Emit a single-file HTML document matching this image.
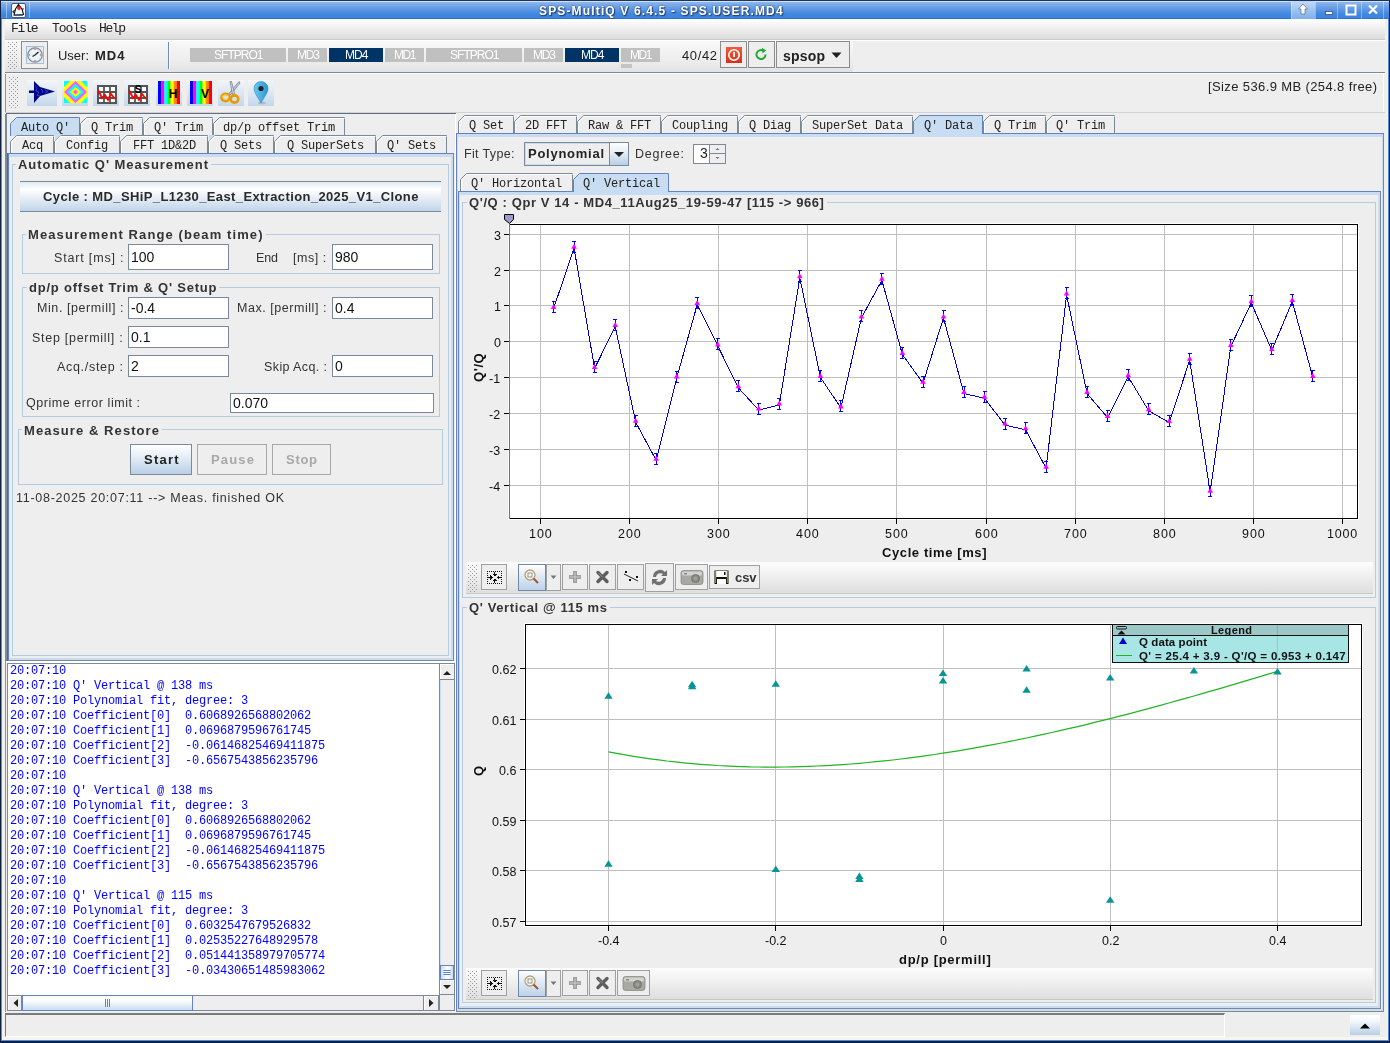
<!DOCTYPE html><html><head><meta charset="utf-8"><style>
html,body{margin:0;padding:0;}
body{width:1390px;height:1043px;overflow:hidden;position:relative;background:#eeeeee;font-family:"Liberation Sans",sans-serif;}
.r{position:absolute;box-sizing:border-box;}
.t{position:absolute;white-space:pre;line-height:0;height:0;will-change:transform;}
svg{position:absolute;}
</style></head><body>

<div class="r" style="left:0px;top:0px;width:1390px;height:19px;background:linear-gradient(#9cc0ef 0%,#6fa2e8 35%,#4489e0 70%,#3a82dc 100%)"></div>
<div class="r" style="left:0px;top:0px;width:1390px;height:1px;background:#1b3458"></div>
<div class="r" style="left:0px;top:1px;width:1390px;height:1px;background:#cfe2fa"></div>
<div class="r" style="left:0px;top:18px;width:1390px;height:1px;background:#2f74d4"></div>
<div class="t" style="left:538.50px;top:4.00px;font:bold 12px 'Liberation Sans',sans-serif;color:#ffffff;letter-spacing:1.152px;text-shadow:0 0 2px #1f3f70,1px 1px 1px #1f3f70;">SPS-MultiQ V 6.4.5 - SPS.USER.MD4</div>
<div class="r" style="left:10.5px;top:2.5px;width:15px;height:15px;background:#f8f8f8;border:1px solid #4a5a70;border-radius:2px"></div>
<svg style="left:11px;top:3px" width="14" height="14"><path d="M7.5 1.5 L11 6 L12.5 11.5 L3 12 L4.5 6 Z" fill="#fafafa" stroke="#111" stroke-width="1.1"/><path d="M7.5 1.5 L9.5 4 L6 4 Z" fill="#111"/><circle cx="8" cy="5" r="1.9" fill="#e8202a"/><path d="M4.5 7 L2 8.5 L2.5 10" fill="none" stroke="#333" stroke-width="1.2"/><path d="M11 7 L12.5 5.5" stroke="#333" stroke-width="1.2"/><path d="M3 12.5 H12" stroke="#2a4a80" stroke-width="0.8"/></svg>
<div class="r" style="left:6px;top:1px;width:1px;height:17px;background:rgba(255,255,255,0.4)"></div>
<div class="r" style="left:29px;top:1px;width:1px;height:17px;background:rgba(255,255,255,0.4)"></div>
<div class="r" style="left:1291px;top:1px;width:24px;height:18px;background:linear-gradient(#c2d9f6,#7eaee9)"></div>
<div class="r" style="left:1291px;top:1px;width:1px;height:18px;background:rgba(255,255,255,0.35)"></div>
<div class="r" style="left:1315px;top:1px;width:1px;height:18px;background:rgba(255,255,255,0.35)"></div>
<div class="r" style="left:1337px;top:1px;width:1px;height:18px;background:rgba(255,255,255,0.35)"></div>
<div class="r" style="left:1361px;top:1px;width:1px;height:18px;background:rgba(255,255,255,0.35)"></div>
<div class="r" style="left:1383px;top:1px;width:1px;height:18px;background:rgba(255,255,255,0.35)"></div>
<svg style="left:1291px;top:0px" width="100" height="19"><path d="M12 4 L7.5 9 L10 9 L10 14 L14 14 L14 9 L16.5 9 Z" fill="#fff" stroke="#3a5a88" stroke-width="0.6"/><rect x="34.5" y="11.5" width="7" height="3" fill="#fff" stroke="#2d4f80" stroke-width="0.8"/><rect x="55.5" y="5.5" width="9" height="9" fill="none" stroke="#fff" stroke-width="2"/><path d="M78 5.5 L86 13.5 M86 5.5 L78 13.5" stroke="#fff" stroke-width="2.2"/></svg>
<div class="r" style="left:0px;top:0px;width:1px;height:1043px;background:#0e2344"></div>
<div class="r" style="left:1px;top:19px;width:1px;height:1024px;background:#4f8edc"></div>
<div class="r" style="left:2px;top:19px;width:3px;height:1024px;background:#f3f1ec"></div>
<div class="r" style="left:1389px;top:0px;width:1px;height:1043px;background:#0e2344"></div>
<div class="r" style="left:1388px;top:19px;width:1px;height:1024px;background:#4f8edc"></div>
<div class="r" style="left:1385px;top:19px;width:3px;height:1024px;background:#f3f1ec"></div>
<div class="r" style="left:0px;top:1041px;width:1390px;height:2px;background:#0e2344"></div>
<div class="r" style="left:1px;top:1040px;width:1388px;height:1px;background:#4f8edc"></div>
<div class="r" style="left:2px;top:1037px;width:1386px;height:3px;background:#f6f5f2"></div>
<div class="r" style="left:5px;top:19px;width:1380px;height:20px;background:linear-gradient(#ffffff,#f0f0f0 45%,#dcdcdc)"></div>
<div class="r" style="left:5px;top:39px;width:1380px;height:1px;background:#cbcbcb"></div>
<div class="r" style="left:5px;top:40px;width:1380px;height:1px;background:#ffffff"></div>
<div class="t" style="left:11.00px;top:21.00px;font:normal 13px 'Liberation Mono',monospace;color:#222;letter-spacing:-1.229px;">File</div>
<div class="t" style="left:51.50px;top:21.00px;font:normal 13px 'Liberation Mono',monospace;color:#222;letter-spacing:-0.996px;">Tools</div>
<div class="t" style="left:99.00px;top:21.00px;font:normal 13px 'Liberation Mono',monospace;color:#222;letter-spacing:-1.396px;">Help</div>
<div class="r" style="left:5px;top:41px;width:848px;height:31px;background:linear-gradient(#f8f8f8,#eeeeee 60%,#e2e2e2)"></div>
<div class="r" style="left:5px;top:72px;width:1380px;height:1px;background:#7a8a99"></div>
<div class="r" style="left:5px;top:73px;width:1380px;height:1px;background:#ffffff"></div>
<svg style="left:7px;top:41px" width="10" height="28">
<rect x="1" y="1" width="1" height="1" fill="#9a9a9a"/>
<rect x="5" y="1" width="1" height="1" fill="#9a9a9a"/>
<rect x="9" y="1" width="1" height="1" fill="#9a9a9a"/>
<rect x="3" y="3" width="1" height="1" fill="#9a9a9a"/>
<rect x="7" y="3" width="1" height="1" fill="#9a9a9a"/>
<rect x="1" y="5" width="1" height="1" fill="#9a9a9a"/>
<rect x="5" y="5" width="1" height="1" fill="#9a9a9a"/>
<rect x="9" y="5" width="1" height="1" fill="#9a9a9a"/>
<rect x="3" y="7" width="1" height="1" fill="#9a9a9a"/>
<rect x="7" y="7" width="1" height="1" fill="#9a9a9a"/>
<rect x="1" y="9" width="1" height="1" fill="#9a9a9a"/>
<rect x="5" y="9" width="1" height="1" fill="#9a9a9a"/>
<rect x="9" y="9" width="1" height="1" fill="#9a9a9a"/>
<rect x="3" y="11" width="1" height="1" fill="#9a9a9a"/>
<rect x="7" y="11" width="1" height="1" fill="#9a9a9a"/>
<rect x="1" y="13" width="1" height="1" fill="#9a9a9a"/>
<rect x="5" y="13" width="1" height="1" fill="#9a9a9a"/>
<rect x="9" y="13" width="1" height="1" fill="#9a9a9a"/>
<rect x="3" y="15" width="1" height="1" fill="#9a9a9a"/>
<rect x="7" y="15" width="1" height="1" fill="#9a9a9a"/>
<rect x="1" y="17" width="1" height="1" fill="#9a9a9a"/>
<rect x="5" y="17" width="1" height="1" fill="#9a9a9a"/>
<rect x="9" y="17" width="1" height="1" fill="#9a9a9a"/>
<rect x="3" y="19" width="1" height="1" fill="#9a9a9a"/>
<rect x="7" y="19" width="1" height="1" fill="#9a9a9a"/>
<rect x="1" y="21" width="1" height="1" fill="#9a9a9a"/>
<rect x="5" y="21" width="1" height="1" fill="#9a9a9a"/>
<rect x="9" y="21" width="1" height="1" fill="#9a9a9a"/>
<rect x="3" y="23" width="1" height="1" fill="#9a9a9a"/>
<rect x="7" y="23" width="1" height="1" fill="#9a9a9a"/>
<rect x="1" y="25" width="1" height="1" fill="#9a9a9a"/>
<rect x="5" y="25" width="1" height="1" fill="#9a9a9a"/>
<rect x="9" y="25" width="1" height="1" fill="#9a9a9a"/>
<rect x="3" y="27" width="1" height="1" fill="#9a9a9a"/>
<rect x="7" y="27" width="1" height="1" fill="#9a9a9a"/>
</svg>
<div class="r" style="left:21px;top:41px;width:27px;height:28px;border:1px solid #8c8c8c;background:#eeeeee"></div>
<div class="r" style="left:26px;top:46px;width:18px;height:18px;border:1px solid #a9bed3;background:#e4ebf2"></div>
<svg style="left:26px;top:46px" width="18" height="18"><circle cx="9" cy="9" r="7.2" fill="#cfe9f7" stroke="#8a8a8a" stroke-width="1.2"/><circle cx="9" cy="9" r="5.5" fill="#e9f6fc"/><path d="M9 9 L12.5 6 M9 9 L6.5 10.5" stroke="#222" stroke-width="1.3"/><circle cx="14.5" cy="9" r="0.8" fill="#e55"/><circle cx="3.5" cy="9" r="0.8" fill="#e55"/><circle cx="9" cy="3.2" r="0.8" fill="#e55"/><circle cx="9" cy="14.8" r="0.8" fill="#e55"/></svg>
<div class="t" style="left:57.50px;top:48.00px;font:normal 13px 'Liberation Sans',sans-serif;color:#222;letter-spacing:-0.016px;">User:</div>
<div class="t" style="left:94.50px;top:48.00px;font:bold 13px 'Liberation Sans',sans-serif;color:#222;letter-spacing:1.023px;">MD4</div>
<div class="r" style="left:168px;top:42px;width:1px;height:27px;background:#6d8cc4"></div>
<div class="r" style="left:169px;top:42px;width:1px;height:27px;background:#ffffff"></div>
<div class="r" style="left:190px;top:48px;width:96px;height:14px;background:#c0c0c0"></div>
<div class="t" style="left:213.75px;top:48.00px;font:normal 12px 'Liberation Sans',sans-serif;color:#ffffff;letter-spacing:-0.971px;">SFTPRO1</div>
<div class="r" style="left:288px;top:48px;width:39px;height:14px;background:#c0c0c0"></div>
<div class="t" style="left:296.50px;top:48.00px;font:normal 12px 'Liberation Sans',sans-serif;color:#ffffff;letter-spacing:-1.172px;">MD3</div>
<div class="r" style="left:329px;top:48px;width:54px;height:14px;background:#003366"></div>
<div class="t" style="left:344.75px;top:48.00px;font:normal 12px 'Liberation Sans',sans-serif;color:#ffffff;letter-spacing:-0.922px;">MD4</div>
<div class="r" style="left:385px;top:48px;width:39px;height:14px;background:#c0c0c0"></div>
<div class="t" style="left:393.75px;top:48.00px;font:normal 12px 'Liberation Sans',sans-serif;color:#ffffff;letter-spacing:-1.422px;">MD1</div>
<div class="r" style="left:426px;top:48px;width:96px;height:14px;background:#c0c0c0"></div>
<div class="t" style="left:449.75px;top:48.00px;font:normal 12px 'Liberation Sans',sans-serif;color:#ffffff;letter-spacing:-0.971px;">SFTPRO1</div>
<div class="r" style="left:524px;top:48px;width:39px;height:14px;background:#c0c0c0"></div>
<div class="t" style="left:532.50px;top:48.00px;font:normal 12px 'Liberation Sans',sans-serif;color:#ffffff;letter-spacing:-1.172px;">MD3</div>
<div class="r" style="left:565px;top:48px;width:54px;height:14px;background:#003366"></div>
<div class="t" style="left:580.75px;top:48.00px;font:normal 12px 'Liberation Sans',sans-serif;color:#ffffff;letter-spacing:-0.922px;">MD4</div>
<div class="r" style="left:621px;top:48px;width:39px;height:14px;background:#c0c0c0"></div>
<div class="t" style="left:629.75px;top:48.00px;font:normal 12px 'Liberation Sans',sans-serif;color:#ffffff;letter-spacing:-1.422px;">MD1</div>
<div class="r" style="left:621px;top:64px;width:11px;height:4px;background:#c4c4c4"></div>
<div class="t" style="left:681.50px;top:48.00px;font:normal 13px 'Liberation Sans',sans-serif;color:#222;letter-spacing:0.613px;">40/42</div>
<div class="r" style="left:720px;top:41px;width:27px;height:27px;border:1px solid #8c8c8c;background:#eeeeee"></div>
<div class="r" style="left:726px;top:47px;width:16px;height:16px;background:linear-gradient(#f5593a,#d9301b)"></div>
<svg style="left:726px;top:47px" width="16" height="16"><circle cx="8" cy="8" r="5.2" fill="none" stroke="#fff" stroke-width="1.6"/><rect x="7.1" y="5" width="1.8" height="5" fill="#fff"/></svg>
<div class="r" style="left:748px;top:41px;width:27px;height:27px;border:1px solid #8c8c8c;background:#eeeeee"></div>
<svg style="left:753px;top:46px" width="17" height="17"><path d="M12.5 8.5 A4.5 4.5 0 1 1 10.2 4.6" fill="none" stroke="#22aa33" stroke-width="2"/><path d="M8.8 1.8 L13.2 4.2 L9.6 7.6 Z" fill="#22aa33"/></svg>
<div class="r" style="left:776px;top:41px;width:74px;height:27px;border:1px solid #8c8c8c;background:#eeeeee"></div>
<div class="t" style="left:783.00px;top:48.00px;font:bold 14px 'Liberation Sans',sans-serif;color:#222;letter-spacing:0.199px;">spsop</div>
<svg style="left:831px;top:51.5px" width="12" height="8"><path d="M0.5 0.5 L10.5 0.5 L5.5 6 Z" fill="#222"/></svg>
<div class="r" style="left:5px;top:74px;width:1380px;height:38px;background:#eeeeee"></div>
<div class="r" style="left:5px;top:74px;width:1px;height:39px;background:#8496ad"></div>
<div class="r" style="left:1383px;top:74px;width:1px;height:38px;background:#ffffff"></div>
<div class="r" style="left:5px;top:112px;width:1380px;height:1px;background:#d2d2d2"></div>
<div class="r" style="left:6px;top:113px;width:450px;height:1px;background:#5f6f84"></div>
<svg style="left:8px;top:76px" width="10" height="33">
<rect x="1" y="1" width="1" height="1" fill="#9a9a9a"/>
<rect x="5" y="1" width="1" height="1" fill="#9a9a9a"/>
<rect x="9" y="1" width="1" height="1" fill="#9a9a9a"/>
<rect x="3" y="3" width="1" height="1" fill="#9a9a9a"/>
<rect x="7" y="3" width="1" height="1" fill="#9a9a9a"/>
<rect x="1" y="5" width="1" height="1" fill="#9a9a9a"/>
<rect x="5" y="5" width="1" height="1" fill="#9a9a9a"/>
<rect x="9" y="5" width="1" height="1" fill="#9a9a9a"/>
<rect x="3" y="7" width="1" height="1" fill="#9a9a9a"/>
<rect x="7" y="7" width="1" height="1" fill="#9a9a9a"/>
<rect x="1" y="9" width="1" height="1" fill="#9a9a9a"/>
<rect x="5" y="9" width="1" height="1" fill="#9a9a9a"/>
<rect x="9" y="9" width="1" height="1" fill="#9a9a9a"/>
<rect x="3" y="11" width="1" height="1" fill="#9a9a9a"/>
<rect x="7" y="11" width="1" height="1" fill="#9a9a9a"/>
<rect x="1" y="13" width="1" height="1" fill="#9a9a9a"/>
<rect x="5" y="13" width="1" height="1" fill="#9a9a9a"/>
<rect x="9" y="13" width="1" height="1" fill="#9a9a9a"/>
<rect x="3" y="15" width="1" height="1" fill="#9a9a9a"/>
<rect x="7" y="15" width="1" height="1" fill="#9a9a9a"/>
<rect x="1" y="17" width="1" height="1" fill="#9a9a9a"/>
<rect x="5" y="17" width="1" height="1" fill="#9a9a9a"/>
<rect x="9" y="17" width="1" height="1" fill="#9a9a9a"/>
<rect x="3" y="19" width="1" height="1" fill="#9a9a9a"/>
<rect x="7" y="19" width="1" height="1" fill="#9a9a9a"/>
<rect x="1" y="21" width="1" height="1" fill="#9a9a9a"/>
<rect x="5" y="21" width="1" height="1" fill="#9a9a9a"/>
<rect x="9" y="21" width="1" height="1" fill="#9a9a9a"/>
<rect x="3" y="23" width="1" height="1" fill="#9a9a9a"/>
<rect x="7" y="23" width="1" height="1" fill="#9a9a9a"/>
<rect x="1" y="25" width="1" height="1" fill="#9a9a9a"/>
<rect x="5" y="25" width="1" height="1" fill="#9a9a9a"/>
<rect x="9" y="25" width="1" height="1" fill="#9a9a9a"/>
<rect x="3" y="27" width="1" height="1" fill="#9a9a9a"/>
<rect x="7" y="27" width="1" height="1" fill="#9a9a9a"/>
<rect x="1" y="29" width="1" height="1" fill="#9a9a9a"/>
<rect x="5" y="29" width="1" height="1" fill="#9a9a9a"/>
<rect x="9" y="29" width="1" height="1" fill="#9a9a9a"/>
<rect x="3" y="31" width="1" height="1" fill="#9a9a9a"/>
<rect x="7" y="31" width="1" height="1" fill="#9a9a9a"/>
</svg>
<div class="r" style="left:27px;top:79.5px;width:30px;height:26px;background:linear-gradient(#f3f6fa,#c4d7ea)"></div>
<div class="r" style="left:62px;top:79.5px;width:26px;height:26px;background:linear-gradient(#f3f6fa,#c4d7ea)"></div>
<div class="r" style="left:93px;top:79.5px;width:26px;height:26px;background:linear-gradient(#f3f6fa,#c4d7ea)"></div>
<div class="r" style="left:124px;top:79.5px;width:26px;height:26px;background:linear-gradient(#f3f6fa,#c4d7ea)"></div>
<div class="r" style="left:155.5px;top:79.5px;width:26px;height:26px;background:linear-gradient(#f3f6fa,#c4d7ea)"></div>
<div class="r" style="left:187px;top:79.5px;width:26px;height:26px;background:linear-gradient(#f3f6fa,#c4d7ea)"></div>
<div class="r" style="left:217.5px;top:79.5px;width:26px;height:26px;background:linear-gradient(#f3f6fa,#c4d7ea)"></div>
<div class="r" style="left:248px;top:79.5px;width:26px;height:26px;background:linear-gradient(#f3f6fa,#c4d7ea)"></div>
<svg style="left:27px;top:79px" width="30" height="27"><path d="M2 11.5 H7 V2 L13 8 L28 12.5 L13 17 L7 24 V14 H2 Z" fill="#000088"/><path d="M8 6 l2 3 l-1 3 l3 1 l-2 3 l3 1 M14 10 l2 2 l-1 2 M18 11 l3 1.5 l-3 1.5" stroke="#2a4fd0" stroke-width="0.9" fill="none"/></svg>
<svg style="left:63.5px;top:81px" width="23" height="22"><defs><linearGradient id="rb" x1="0" y1="0" x2="1" y2="1"><stop offset="0" stop-color="#ff00ff"/><stop offset="0.2" stop-color="#00ffff"/><stop offset="0.4" stop-color="#ffff00"/><stop offset="0.5" stop-color="#ff66cc"/><stop offset="0.6" stop-color="#ffff00"/><stop offset="0.8" stop-color="#00ffff"/><stop offset="1" stop-color="#ff00ff"/></linearGradient></defs><rect width="23" height="22" fill="#ffff00"/><path d="M11.5 0 L23 11 L11.5 22 L0 11 Z" fill="#ff55ff"/><path d="M11.5 3 L20 11 L11.5 19 L3 11 Z" fill="#00ffff"/><path d="M11.5 6 L17 11 L11.5 16 L6 11 Z" fill="#ffff00"/><path d="M11.5 8.5 L14 11 L11.5 13.5 L9 11 Z" fill="#ff55ff"/><path d="M0 0 L6 0 L0 6 Z M23 0 L17 0 L23 6 Z M0 22 L6 22 L0 16 Z M23 22 L17 22 L23 16 Z" fill="#00ffff"/></svg>
<svg style="left:97px;top:83.5px" width="20" height="20">
<rect x="1" y="2" width="18" height="17" fill="#fff" stroke="#555" stroke-width="2"/>
<path d="M7 2 V19 M13 2 V19 M1 8 H19 M1 14 H19" stroke="#555" stroke-width="1.8"/>
<path d="M1 6 L5 14 L8 11 L11 16 L14 10 L18 15" stroke="#f00" stroke-width="1.8" fill="none"/>
</svg>
<svg style="left:128px;top:83.5px" width="20" height="20">
<rect x="1" y="2" width="18" height="17" fill="#fff" stroke="#555" stroke-width="2"/>
<path d="M7 2 V19 M13 2 V19 M1 8 H19 M1 14 H19" stroke="#555" stroke-width="1.8"/>
<path d="M1 6 L5 14 L8 11 L11 16 L14 10 L18 15" stroke="#f00" stroke-width="1.8" fill="none"/>
<text x="10" y="9" font-family="Liberation Sans" font-weight="bold" font-size="10" text-anchor="middle" fill="#000">S</text>
</svg>
<svg style="left:158px;top:81px" width="22" height="23">
<rect x="0" y="0" width="3.3" height="23" fill="#0000ff"/>
<rect x="3.143" y="0" width="3.3" height="23" fill="#ff00ff"/>
<rect x="6.286" y="0" width="3.3" height="23" fill="#00ffff"/>
<rect x="9.429" y="0" width="3.3" height="23" fill="#00ff00"/>
<rect x="12.572" y="0" width="3.3" height="23" fill="#ffff00"/>
<rect x="15.715" y="0" width="3.3" height="23" fill="#ff8800"/>
<rect x="18.858" y="0" width="3.3" height="23" fill="#ff0000"/>
<text x="15" y="17" font-family="Liberation Sans" font-weight="bold" font-size="12" text-anchor="middle" fill="#000">H</text></svg>
<svg style="left:189.5px;top:81px" width="22" height="23">
<rect x="0" y="0" width="3.3" height="23" fill="#0000ff"/>
<rect x="3.143" y="0" width="3.3" height="23" fill="#ff00ff"/>
<rect x="6.286" y="0" width="3.3" height="23" fill="#00ffff"/>
<rect x="9.429" y="0" width="3.3" height="23" fill="#00ff00"/>
<rect x="12.572" y="0" width="3.3" height="23" fill="#ffff00"/>
<rect x="15.715" y="0" width="3.3" height="23" fill="#ff8800"/>
<rect x="18.858" y="0" width="3.3" height="23" fill="#ff0000"/>
<text x="15" y="17" font-family="Liberation Sans" font-weight="bold" font-size="12" text-anchor="middle" fill="#000">V</text></svg>
<svg style="left:219px;top:80px" width="23" height="25"><path d="M9.5 14 L20 1.5 L21 3 L12 14.5 Z" fill="#c8ccd4" stroke="#6a7080" stroke-width="0.7"/><path d="M13.5 14.5 L11 1.5 L12.5 1.5 L15.5 13.5 Z" fill="#dde0e6" stroke="#6a7080" stroke-width="0.7"/><ellipse cx="6.5" cy="17.5" rx="4" ry="3.6" fill="none" stroke="#e89a00" stroke-width="2.6"/><ellipse cx="15.5" cy="19" rx="3.8" ry="3.6" fill="none" stroke="#e89a00" stroke-width="2.6"/><ellipse cx="6.5" cy="17" rx="3" ry="2.5" fill="none" stroke="#ffd040" stroke-width="0.8"/></svg>
<svg style="left:250px;top:80px" width="22" height="25"><defs><linearGradient id="pin" x1="0" x2="1"><stop offset="0" stop-color="#6cc8f0"/><stop offset="1" stop-color="#2a96d0"/></linearGradient></defs><ellipse cx="12" cy="23" rx="4" ry="1.2" fill="rgba(0,0,0,0.15)"/><path d="M11 23 C7 16 4 12 4 8.5 A7 7 0 0 1 18 8.5 C18 12 15 16 11 23 Z" fill="url(#pin)" stroke="#2a8ac0" stroke-width="0.6"/><circle cx="11" cy="8.5" r="2.6" fill="#222"/></svg>
<div class="t" style="left:1208.00px;top:79.00px;font:normal 13px 'Liberation Sans',sans-serif;color:#222;letter-spacing:0.385px;">[Size 536.9 MB (254.8 free)</div>
<div class="r" style="left:5px;top:114px;width:1380px;height:923px;background:#eeeeee"></div>
<div class="r" style="left:5px;top:114px;width:1px;height:923px;background:#8496ad"></div>
<div class="r" style="left:8px;top:153px;width:446px;height:508px;border:1px solid #7a8a99;border-top-color:#6382bf;border-left-color:#6382bf;background:#eeeeee"></div>
<div class="r" style="left:9px;top:154px;width:444px;height:506px;border:1px solid #c8ddf2;border-top-width:3px;border-bottom-width:2px;border-right-width:2px;border-left-color:#dde8f3"></div>
<div class="r" style="left:5px;top:114px;width:2px;height:547px;background:#7a8a99"></div>
<div class="r" style="left:7px;top:153px;width:1px;height:508px;background:#5a6878"></div>
<svg style="left:80px;top:117px" width="64" height="18"><path d="M0.5 18 V6.5 L6.5 0.5 H62.5 V18" fill="#eeeeee" stroke="#7a8a99" stroke-width="1"/><path d="M1.5 18 V7 L7 1.5 H62.5" fill="none" stroke="#ffffff" stroke-width="1"/></svg>
<div class="t" style="left:90.90px;top:121.00px;font:normal 12px 'Liberation Mono',monospace;color:#222;letter-spacing:-0.203px;">Q Trim</div>
<svg style="left:143px;top:117px" width="71" height="18"><path d="M0.5 18 V6.5 L6.5 0.5 H69.5 V18" fill="#eeeeee" stroke="#7a8a99" stroke-width="1"/><path d="M1.5 18 V7 L7 1.5 H69.5" fill="none" stroke="#ffffff" stroke-width="1"/></svg>
<div class="t" style="left:153.90px;top:121.00px;font:normal 12px 'Liberation Mono',monospace;color:#222;letter-spacing:-0.203px;">Q' Trim</div>
<svg style="left:213px;top:117px" width="133" height="18"><path d="M0.5 18 V6.5 L6.5 0.5 H131.5 V18" fill="#eeeeee" stroke="#7a8a99" stroke-width="1"/><path d="M1.5 18 V7 L7 1.5 H131.5" fill="none" stroke="#ffffff" stroke-width="1"/></svg>
<div class="t" style="left:223.40px;top:121.00px;font:normal 12px 'Liberation Mono',monospace;color:#222;letter-spacing:-0.203px;">dp/p offset Trim</div>
<svg style="left:10px;top:117px" width="71" height="19"><path d="M0.5 19 V6.5 L6.5 0.5 H69.5 V19" fill="#c8ddf2" stroke="#6382bf" stroke-width="1"/></svg>
<div class="t" style="left:20.90px;top:121.00px;font:normal 12px 'Liberation Mono',monospace;color:#222;letter-spacing:-0.203px;">Auto Q'</div>
<svg style="left:10px;top:135px" width="45" height="18"><path d="M0.5 18 V6.5 L6.5 0.5 H43.5 V18" fill="#eeeeee" stroke="#7a8a99" stroke-width="1"/><path d="M1.5 18 V7 L7 1.5 H43.5" fill="none" stroke="#ffffff" stroke-width="1"/></svg>
<div class="t" style="left:21.90px;top:139.00px;font:normal 12px 'Liberation Mono',monospace;color:#222;letter-spacing:-0.203px;">Acq</div>
<svg style="left:54px;top:135px" width="67" height="18"><path d="M0.5 18 V6.5 L6.5 0.5 H65.5 V18" fill="#eeeeee" stroke="#7a8a99" stroke-width="1"/><path d="M1.5 18 V7 L7 1.5 H65.5" fill="none" stroke="#ffffff" stroke-width="1"/></svg>
<div class="t" style="left:66.40px;top:139.00px;font:normal 12px 'Liberation Mono',monospace;color:#222;letter-spacing:-0.203px;">Config</div>
<svg style="left:120px;top:135px" width="89" height="18"><path d="M0.5 18 V6.5 L6.5 0.5 H87.5 V18" fill="#eeeeee" stroke="#7a8a99" stroke-width="1"/><path d="M1.5 18 V7 L7 1.5 H87.5" fill="none" stroke="#ffffff" stroke-width="1"/></svg>
<div class="t" style="left:132.90px;top:139.00px;font:normal 12px 'Liberation Mono',monospace;color:#222;letter-spacing:-0.203px;">FFT 1D&amp;2D</div>
<svg style="left:208px;top:135px" width="67" height="18"><path d="M0.5 18 V6.5 L6.5 0.5 H65.5 V18" fill="#eeeeee" stroke="#7a8a99" stroke-width="1"/><path d="M1.5 18 V7 L7 1.5 H65.5" fill="none" stroke="#ffffff" stroke-width="1"/></svg>
<div class="t" style="left:220.40px;top:139.00px;font:normal 12px 'Liberation Mono',monospace;color:#222;letter-spacing:-0.203px;">Q Sets</div>
<svg style="left:274px;top:135px" width="103" height="18"><path d="M0.5 18 V6.5 L6.5 0.5 H101.5 V18" fill="#eeeeee" stroke="#7a8a99" stroke-width="1"/><path d="M1.5 18 V7 L7 1.5 H101.5" fill="none" stroke="#ffffff" stroke-width="1"/></svg>
<div class="t" style="left:286.90px;top:139.00px;font:normal 12px 'Liberation Mono',monospace;color:#222;letter-spacing:-0.203px;">Q SuperSets</div>
<svg style="left:376px;top:135px" width="72" height="18"><path d="M0.5 18 V6.5 L6.5 0.5 H70.5 V18" fill="#eeeeee" stroke="#7a8a99" stroke-width="1"/><path d="M1.5 18 V7 L7 1.5 H70.5" fill="none" stroke="#ffffff" stroke-width="1"/></svg>
<div class="t" style="left:387.40px;top:139.00px;font:normal 12px 'Liberation Mono',monospace;color:#222;letter-spacing:-0.203px;">Q' Sets</div>
<svg style="left:54px;top:135px" width="8" height="8"><path d="M1 0 H7 L1 6 Z" fill="#c8ddf2"/></svg>
<svg style="left:208px;top:135px" width="8" height="8"><path d="M1 0 H7 L1 6 Z" fill="#c8ddf2"/></svg>
<div class="r" style="left:12px;top:164px;width:437px;height:492px;border:1px solid #b3cbe3"></div>
<div class="r" style="left:16.2px;top:163px;width:195px;height:3px;background:#eeeeee"></div>
<div class="t" style="left:18.20px;top:157.00px;font:bold 13px 'Liberation Sans',sans-serif;color:#333;letter-spacing:0.965px;">Automatic Q' Measurement</div>
<div class="r" style="left:20px;top:181px;width:421px;height:31px;border-top:1px solid #7a8a99;border-bottom:1px solid #7a8a99;background:linear-gradient(#dfe9f3,#ffffff 25%,#e6eef6 55%,#c0d5ea)"></div>
<div class="t" style="left:42.50px;top:189.00px;font:bold 13px 'Liberation Sans',sans-serif;color:#2a2a2a;letter-spacing:0.383px;">Cycle : MD_SHiP_L1230_East_Extraction_2025_V1_Clone</div>
<div class="r" style="left:22px;top:234px;width:418px;height:40px;border:1px solid #b3cbe3"></div>
<div class="r" style="left:26.2px;top:233px;width:239.5px;height:3px;background:#eeeeee"></div>
<div class="t" style="left:28.20px;top:227.00px;font:bold 13px 'Liberation Sans',sans-serif;color:#333;letter-spacing:1.098px;">Measurement Range (beam time)</div>
<div class="r" style="left:128px;top:244px;width:101px;height:26px;background:#ffffff;border:1px solid #7a8a99"></div>
<div class="t" style="left:131.00px;top:249.00px;font:normal 14px 'Liberation Sans',sans-serif;color:#111;letter-spacing:0.000px;">100</div>
<div class="t" style="left:53.50px;top:251.00px;font:normal 12.5px 'Liberation Sans',sans-serif;color:#333;letter-spacing:0.828px;">Start [ms] :</div>
<div class="r" style="left:332px;top:244px;width:101px;height:26px;background:#ffffff;border:1px solid #7a8a99"></div>
<div class="t" style="left:335.00px;top:249.00px;font:normal 14px 'Liberation Sans',sans-serif;color:#111;letter-spacing:0.000px;">980</div>
<div class="t" style="left:256.20px;top:251.00px;font:normal 12.5px 'Liberation Sans',sans-serif;color:#333;letter-spacing:-0.125px;">End</div>
<div class="t" style="left:293.30px;top:251.00px;font:normal 12.5px 'Liberation Sans',sans-serif;color:#333;letter-spacing:0.554px;">[ms] :</div>
<div class="r" style="left:22px;top:287px;width:418px;height:130px;border:1px solid #b3cbe3"></div>
<div class="r" style="left:26.5px;top:286px;width:192.5px;height:3px;background:#eeeeee"></div>
<div class="t" style="left:28.50px;top:280.00px;font:bold 13px 'Liberation Sans',sans-serif;color:#333;letter-spacing:0.788px;">dp/p offset Trim &amp; Q' Setup</div>
<div class="r" style="left:128px;top:297px;width:101px;height:22px;background:#ffffff;border:1px solid #7a8a99"></div>
<div class="t" style="left:131.00px;top:300.00px;font:normal 14px 'Liberation Sans',sans-serif;color:#111;letter-spacing:0.000px;">-0.4</div>
<div class="t" style="left:36.50px;top:301.00px;font:normal 12.5px 'Liberation Sans',sans-serif;color:#333;letter-spacing:0.582px;">Min. [permill] :</div>
<div class="r" style="left:332px;top:297px;width:101px;height:22px;background:#ffffff;border:1px solid #7a8a99"></div>
<div class="t" style="left:335.00px;top:300.00px;font:normal 14px 'Liberation Sans',sans-serif;color:#111;letter-spacing:0.000px;">0.4</div>
<div class="t" style="left:237.20px;top:301.00px;font:normal 12.5px 'Liberation Sans',sans-serif;color:#333;letter-spacing:0.544px;">Max. [permill] :</div>
<div class="r" style="left:128px;top:326px;width:101px;height:22px;background:#ffffff;border:1px solid #7a8a99"></div>
<div class="t" style="left:131.00px;top:329.00px;font:normal 14px 'Liberation Sans',sans-serif;color:#111;letter-spacing:0.000px;">0.1</div>
<div class="t" style="left:32.30px;top:331.00px;font:normal 12.5px 'Liberation Sans',sans-serif;color:#333;letter-spacing:0.722px;">Step [permill] :</div>
<div class="r" style="left:128px;top:355px;width:101px;height:22px;background:#ffffff;border:1px solid #7a8a99"></div>
<div class="t" style="left:131.00px;top:358.00px;font:normal 14px 'Liberation Sans',sans-serif;color:#111;letter-spacing:0.000px;">2</div>
<div class="t" style="left:57.00px;top:360.00px;font:normal 12.5px 'Liberation Sans',sans-serif;color:#333;letter-spacing:0.695px;">Acq./step :</div>
<div class="r" style="left:332px;top:355px;width:101px;height:22px;background:#ffffff;border:1px solid #7a8a99"></div>
<div class="t" style="left:335.00px;top:358.00px;font:normal 14px 'Liberation Sans',sans-serif;color:#111;letter-spacing:0.000px;">0</div>
<div class="t" style="left:263.60px;top:360.00px;font:normal 12.5px 'Liberation Sans',sans-serif;color:#333;letter-spacing:0.394px;">Skip Acq. :</div>
<div class="r" style="left:230px;top:393px;width:204px;height:20px;background:#ffffff;border:1px solid #7a8a99"></div>
<div class="t" style="left:233.00px;top:395.00px;font:normal 14px 'Liberation Sans',sans-serif;color:#111;letter-spacing:0.000px;">0.070</div>
<div class="t" style="left:25.50px;top:396.00px;font:normal 12.5px 'Liberation Sans',sans-serif;color:#333;letter-spacing:0.556px;">Qprime error limit :</div>
<div class="r" style="left:18px;top:429px;width:425px;height:56px;border:1px solid #b3cbe3"></div>
<div class="r" style="left:22.2px;top:428px;width:140px;height:3px;background:#eeeeee"></div>
<div class="t" style="left:24.20px;top:423.00px;font:bold 13px 'Liberation Sans',sans-serif;color:#333;letter-spacing:1.075px;">Measure &amp; Restore</div>
<div class="r" style="left:130px;top:444px;width:62px;height:31px;border:1px solid #7a8a99;background:linear-gradient(#ffffff,#e6eef6 40%,#b8cfe5)"></div>
<div class="t" style="left:143.75px;top:452.00px;font:bold 13px 'Liberation Sans',sans-serif;color:#222;letter-spacing:1.219px;">Start</div>
<div class="r" style="left:197px;top:444px;width:70px;height:31px;border:1px solid #a8a8a8;background:#eeeeee"></div>
<div class="t" style="left:210.50px;top:452.00px;font:bold 13px 'Liberation Sans',sans-serif;color:#a8a8a8;letter-spacing:1.172px;">Pause</div>
<div class="r" style="left:272px;top:444px;width:59px;height:31px;border:1px solid #a8a8a8;background:#eeeeee"></div>
<div class="t" style="left:286.00px;top:452.00px;font:bold 13px 'Liberation Sans',sans-serif;color:#a8a8a8;letter-spacing:0.708px;">Stop</div>
<div class="t" style="left:15.90px;top:491.00px;font:normal 12.5px 'Liberation Sans',sans-serif;color:#333;letter-spacing:0.728px;">11-08-2025 20:07:11 --&gt; Meas. finished OK</div>
<div class="r" style="left:7px;top:663px;width:448px;height:348px;border:1px solid #7a8a99;background:#ffffff"></div>
<div class="t" style="left:9.80px;top:664.00px;font:normal 12px 'Liberation Mono',monospace;color:#0000ff;letter-spacing:-0.203px;">20:07:10</div>
<div class="t" style="left:9.80px;top:679.00px;font:normal 12px 'Liberation Mono',monospace;color:#0000ff;letter-spacing:-0.203px;">20:07:10 Q' Vertical @ 138 ms</div>
<div class="t" style="left:9.80px;top:694.00px;font:normal 12px 'Liberation Mono',monospace;color:#0000ff;letter-spacing:-0.203px;">20:07:10 Polynomial fit, degree: 3</div>
<div class="t" style="left:9.80px;top:709.00px;font:normal 12px 'Liberation Mono',monospace;color:#0000ff;letter-spacing:-0.203px;">20:07:10 Coefficient[0]  0.6068926568802062</div>
<div class="t" style="left:9.80px;top:724.00px;font:normal 12px 'Liberation Mono',monospace;color:#0000ff;letter-spacing:-0.203px;">20:07:10 Coefficient[1]  0.0696879596761745</div>
<div class="t" style="left:9.80px;top:739.00px;font:normal 12px 'Liberation Mono',monospace;color:#0000ff;letter-spacing:-0.203px;">20:07:10 Coefficient[2]  -0.06146825469411875</div>
<div class="t" style="left:9.80px;top:754.00px;font:normal 12px 'Liberation Mono',monospace;color:#0000ff;letter-spacing:-0.203px;">20:07:10 Coefficient[3]  -0.6567543856235796</div>
<div class="t" style="left:9.80px;top:769.00px;font:normal 12px 'Liberation Mono',monospace;color:#0000ff;letter-spacing:-0.203px;">20:07:10</div>
<div class="t" style="left:9.80px;top:784.00px;font:normal 12px 'Liberation Mono',monospace;color:#0000ff;letter-spacing:-0.203px;">20:07:10 Q' Vertical @ 138 ms</div>
<div class="t" style="left:9.80px;top:799.00px;font:normal 12px 'Liberation Mono',monospace;color:#0000ff;letter-spacing:-0.203px;">20:07:10 Polynomial fit, degree: 3</div>
<div class="t" style="left:9.80px;top:814.00px;font:normal 12px 'Liberation Mono',monospace;color:#0000ff;letter-spacing:-0.203px;">20:07:10 Coefficient[0]  0.6068926568802062</div>
<div class="t" style="left:9.80px;top:829.00px;font:normal 12px 'Liberation Mono',monospace;color:#0000ff;letter-spacing:-0.203px;">20:07:10 Coefficient[1]  0.0696879596761745</div>
<div class="t" style="left:9.80px;top:844.00px;font:normal 12px 'Liberation Mono',monospace;color:#0000ff;letter-spacing:-0.203px;">20:07:10 Coefficient[2]  -0.06146825469411875</div>
<div class="t" style="left:9.80px;top:859.00px;font:normal 12px 'Liberation Mono',monospace;color:#0000ff;letter-spacing:-0.203px;">20:07:10 Coefficient[3]  -0.6567543856235796</div>
<div class="t" style="left:9.80px;top:874.00px;font:normal 12px 'Liberation Mono',monospace;color:#0000ff;letter-spacing:-0.203px;">20:07:10</div>
<div class="t" style="left:9.80px;top:889.00px;font:normal 12px 'Liberation Mono',monospace;color:#0000ff;letter-spacing:-0.203px;">20:07:10 Q' Vertical @ 115 ms</div>
<div class="t" style="left:9.80px;top:904.00px;font:normal 12px 'Liberation Mono',monospace;color:#0000ff;letter-spacing:-0.203px;">20:07:10 Polynomial fit, degree: 3</div>
<div class="t" style="left:9.80px;top:919.00px;font:normal 12px 'Liberation Mono',monospace;color:#0000ff;letter-spacing:-0.203px;">20:07:10 Coefficient[0]  0.6032547679526832</div>
<div class="t" style="left:9.80px;top:934.00px;font:normal 12px 'Liberation Mono',monospace;color:#0000ff;letter-spacing:-0.203px;">20:07:10 Coefficient[1]  0.02535227648929578</div>
<div class="t" style="left:9.80px;top:949.00px;font:normal 12px 'Liberation Mono',monospace;color:#0000ff;letter-spacing:-0.203px;">20:07:10 Coefficient[2]  0.051441358979705774</div>
<div class="t" style="left:9.80px;top:964.00px;font:normal 12px 'Liberation Mono',monospace;color:#0000ff;letter-spacing:-0.203px;">20:07:10 Coefficient[3]  -0.03430651485983062</div>
<div class="r" style="left:439px;top:664px;width:16px;height:331px;background:#eeeeee;border-left:1px solid #7a8a99;border-right:1px solid #7a8a99"></div>
<div class="r" style="left:440px;top:664px;width:14px;height:16px;background:#eeeeee;border-bottom:1px solid #7a8a99;box-shadow:inset 1px 1px 0 #fff"></div>
<svg style="left:440px;top:664px" width="14" height="16"><path d="M3 11 L11 11 L7 7 Z" fill="#222"/></svg>
<div class="r" style="left:440px;top:680px;width:1px;height:285px;background:#c8ddf2"></div>
<div class="r" style="left:440px;top:965px;width:14px;height:15px;border:1px solid #6382bf;background:linear-gradient(90deg,#c8ddf2,#ffffff 55%,#c8ddf2)"></div>
<svg style="left:440px;top:965px" width="14" height="15"><path d="M3.5 5.5 H10.5 M3.5 7.5 H10.5 M3.5 9.5 H10.5" stroke="#6382bf" stroke-width="1"/></svg>
<div class="r" style="left:440px;top:980px;width:14px;height:15px;background:#eeeeee;border-bottom:1px solid #7a8a99;box-shadow:inset 1px 1px 0 #fff"></div>
<svg style="left:440px;top:980px" width="14" height="15"><path d="M3 5 L11 5 L7 9 Z" fill="#222"/></svg>
<div class="r" style="left:7px;top:995px;width:448px;height:16px;background:#eeeeee;border:1px solid #7a8a99"></div>
<div class="r" style="left:8px;top:996px;width:14px;height:14px;background:#eeeeee;border-right:1px solid #7a8a99;box-shadow:inset 1px 1px 0 #fff"></div>
<svg style="left:8px;top:996px" width="14" height="14"><path d="M10 3 L10 11 L5.5 7 Z" fill="#222"/></svg>
<div class="r" style="left:22px;top:995px;width:171px;height:16px;border:1px solid #6382bf;background:linear-gradient(#f7f9fc,#ffffff 30%,#c8ddf2)"></div>
<svg style="left:100px;top:996px" width="14" height="14"><path d="M5.5 3 V11 M7.5 3 V11 M9.5 3 V11" stroke="#6382bf" stroke-width="1"/></svg>
<div class="r" style="left:423px;top:996px;width:16px;height:14px;background:#eeeeee;border-left:1px solid #7a8a99;border-right:1px solid #7a8a99;box-shadow:inset 1px 1px 0 #fff"></div>
<svg style="left:424px;top:996px" width="14" height="14"><path d="M5 3 L5 11 L9.5 7 Z" fill="#222"/></svg>
<div class="r" style="left:439px;top:995px;width:16px;height:16px;background:#eeeeee;border:1px solid #7a8a99;border-top:none"></div>
<div class="r" style="left:5px;top:1012px;width:1380px;height:2px;background:#eeeeee"></div>
<div class="r" style="left:5px;top:1013px;width:1220px;height:24px;border-top:2px solid #7b7b7b;border-left:1px solid #7b7b7b;border-right:1px solid #ffffff;border-bottom:1px solid #ffffff;background:#eeeeee"></div>
<div class="r" style="left:1350px;top:1015px;width:30px;height:20px;background:linear-gradient(#ffffff,#f4f8fc 30%,#b8cfe5)"></div>
<svg style="left:1350px;top:1015px" width="30" height="20"><path d="M10 13.5 L20 13.5 L15 8.5 Z" fill="#000"/></svg>
<div class="r" style="left:455px;top:114px;width:1px;height:898px;background:#ffffff"></div>
<div class="r" style="left:6px;top:661px;width:449px;height:2px;background:#ffffff"></div>
<div class="r" style="left:456px;top:133px;width:928px;height:879px;border:1px solid #7a8a99;border-top-color:#6382bf;border-left-color:#6382bf;background:#eeeeee"></div>
<div class="r" style="left:457px;top:134px;width:926px;height:877px;border:1px solid #c8ddf2;border-top-width:3px;border-bottom-width:2px"></div>
<svg style="left:458px;top:115px" width="57" height="18"><path d="M0.5 18 V6.5 L6.5 0.5 H55.5 V18" fill="#eeeeee" stroke="#7a8a99" stroke-width="1"/><path d="M1.5 18 V7 L7 1.5 H55.5" fill="none" stroke="#ffffff" stroke-width="1"/></svg>
<div class="t" style="left:468.90px;top:119.00px;font:normal 12px 'Liberation Mono',monospace;color:#222;letter-spacing:-0.203px;">Q Set</div>
<svg style="left:514px;top:115px" width="64" height="18"><path d="M0.5 18 V6.5 L6.5 0.5 H62.5 V18" fill="#eeeeee" stroke="#7a8a99" stroke-width="1"/><path d="M1.5 18 V7 L7 1.5 H62.5" fill="none" stroke="#ffffff" stroke-width="1"/></svg>
<div class="t" style="left:524.90px;top:119.00px;font:normal 12px 'Liberation Mono',monospace;color:#222;letter-spacing:-0.203px;">2D FFT</div>
<svg style="left:577px;top:115px" width="85" height="18"><path d="M0.5 18 V6.5 L6.5 0.5 H83.5 V18" fill="#eeeeee" stroke="#7a8a99" stroke-width="1"/><path d="M1.5 18 V7 L7 1.5 H83.5" fill="none" stroke="#ffffff" stroke-width="1"/></svg>
<div class="t" style="left:587.90px;top:119.00px;font:normal 12px 'Liberation Mono',monospace;color:#222;letter-spacing:-0.203px;">Raw &amp; FFT</div>
<svg style="left:661px;top:115px" width="78" height="18"><path d="M0.5 18 V6.5 L6.5 0.5 H76.5 V18" fill="#eeeeee" stroke="#7a8a99" stroke-width="1"/><path d="M1.5 18 V7 L7 1.5 H76.5" fill="none" stroke="#ffffff" stroke-width="1"/></svg>
<div class="t" style="left:671.90px;top:119.00px;font:normal 12px 'Liberation Mono',monospace;color:#222;letter-spacing:-0.203px;">Coupling</div>
<svg style="left:738px;top:115px" width="64" height="18"><path d="M0.5 18 V6.5 L6.5 0.5 H62.5 V18" fill="#eeeeee" stroke="#7a8a99" stroke-width="1"/><path d="M1.5 18 V7 L7 1.5 H62.5" fill="none" stroke="#ffffff" stroke-width="1"/></svg>
<div class="t" style="left:748.90px;top:119.00px;font:normal 12px 'Liberation Mono',monospace;color:#222;letter-spacing:-0.203px;">Q Diag</div>
<svg style="left:801px;top:115px" width="113" height="18"><path d="M0.5 18 V6.5 L6.5 0.5 H111.5 V18" fill="#eeeeee" stroke="#7a8a99" stroke-width="1"/><path d="M1.5 18 V7 L7 1.5 H111.5" fill="none" stroke="#ffffff" stroke-width="1"/></svg>
<div class="t" style="left:811.90px;top:119.00px;font:normal 12px 'Liberation Mono',monospace;color:#222;letter-spacing:-0.203px;">SuperSet Data</div>
<svg style="left:983px;top:115px" width="64" height="18"><path d="M0.5 18 V6.5 L6.5 0.5 H62.5 V18" fill="#eeeeee" stroke="#7a8a99" stroke-width="1"/><path d="M1.5 18 V7 L7 1.5 H62.5" fill="none" stroke="#ffffff" stroke-width="1"/></svg>
<div class="t" style="left:993.90px;top:119.00px;font:normal 12px 'Liberation Mono',monospace;color:#222;letter-spacing:-0.203px;">Q Trim</div>
<svg style="left:1046px;top:115px" width="70" height="18"><path d="M0.5 18 V6.5 L6.5 0.5 H68.5 V18" fill="#eeeeee" stroke="#7a8a99" stroke-width="1"/><path d="M1.5 18 V7 L7 1.5 H68.5" fill="none" stroke="#ffffff" stroke-width="1"/></svg>
<div class="t" style="left:1056.40px;top:119.00px;font:normal 12px 'Liberation Mono',monospace;color:#222;letter-spacing:-0.203px;">Q' Trim</div>
<svg style="left:913px;top:115px" width="71" height="19"><path d="M0.5 19 V6.5 L6.5 0.5 H69.5 V19" fill="#c8ddf2" stroke="#6382bf" stroke-width="1"/></svg>
<div class="t" style="left:923.90px;top:119.00px;font:normal 12px 'Liberation Mono',monospace;color:#222;letter-spacing:-0.203px;">Q' Data</div>
<div class="t" style="left:463.60px;top:147.00px;font:normal 12.5px 'Liberation Sans',sans-serif;color:#333;letter-spacing:0.348px;">Fit Type:</div>
<div class="r" style="left:524px;top:142px;width:105px;height:24px;border:1px solid #7a8a99;background:#eeeeee"></div>
<div class="r" style="left:525px;top:143px;width:84px;height:22px;border:1px solid #c8ddf2;border-right:none"></div>
<div class="t" style="left:527.50px;top:146.00px;font:bold 13px 'Liberation Sans',sans-serif;color:#222;letter-spacing:0.740px;">Polynomial</div>
<div class="r" style="left:609px;top:142px;width:20px;height:24px;border:1px solid #7a8a99;background:linear-gradient(#ffffff,#e8eff7 40%,#b8cfe5)"></div>
<svg style="left:609px;top:142px" width="20" height="24"><path d="M5 10 L15 10 L10 15 Z" fill="#222"/></svg>
<div class="t" style="left:634.60px;top:147.00px;font:normal 12.5px 'Liberation Sans',sans-serif;color:#333;letter-spacing:0.755px;">Degree:</div>
<div class="r" style="left:693px;top:144px;width:33px;height:20px;border:1px solid #7a8a99;background:#eeeeee"></div>
<div class="r" style="left:694px;top:145px;width:16px;height:18px;background:#ffffff"></div>
<div class="t" style="left:699.50px;top:145.00px;font:normal 14px 'Liberation Sans',sans-serif;color:#222;letter-spacing:0.000px;">3</div>
<div class="r" style="left:709px;top:145px;width:1px;height:18px;background:#7a8a99"></div>
<div class="r" style="left:710px;top:153px;width:15px;height:1px;background:#7a8a99"></div>
<svg style="left:710px;top:145px" width="15" height="18"><path d="M5.5 5 L9.5 5 L7.5 3 Z M5.5 12 L9.5 12 L7.5 14 Z" fill="#777"/></svg>
<div class="r" style="left:458px;top:191px;width:923px;height:818px;border:1px solid #7a8a99;border-top-color:#6382bf;border-left-color:#6382bf;background:#eeeeee"></div>
<div class="r" style="left:459px;top:192px;width:921px;height:816px;border:1px solid #c8ddf2;border-top-width:3px;border-bottom-width:2px;border-right-width:2px"></div>
<svg style="left:460px;top:173px" width="114" height="18"><path d="M0.5 18 V6.5 L6.5 0.5 H112.5 V18" fill="#eeeeee" stroke="#7a8a99" stroke-width="1"/><path d="M1.5 18 V7 L7 1.5 H112.5" fill="none" stroke="#ffffff" stroke-width="1"/></svg>
<div class="t" style="left:471.40px;top:177.00px;font:normal 12px 'Liberation Mono',monospace;color:#222;letter-spacing:-0.203px;">Q' Horizontal</div>
<svg style="left:573px;top:173px" width="97" height="19"><path d="M0.5 19 V6.5 L6.5 0.5 H95.5 V19" fill="#c8ddf2" stroke="#6382bf" stroke-width="1"/></svg>
<div class="t" style="left:582.90px;top:177.00px;font:normal 12px 'Liberation Mono',monospace;color:#222;letter-spacing:-0.203px;">Q' Vertical</div>
<div class="r" style="left:462px;top:202px;width:914px;height:396px;border:1px solid #b3cbe3"></div>
<div class="r" style="left:466.8px;top:201px;width:360px;height:3px;background:#eeeeee"></div>
<div class="t" style="left:468.80px;top:195.00px;font:bold 13px 'Liberation Sans',sans-serif;color:#333;letter-spacing:0.599px;">Q'/Q : Qpr V 14 - MD4_11Aug25_19-59-47 [115 -&gt; 966]</div>
<div class="r" style="left:462px;top:607px;width:914px;height:396px;border:1px solid #b3cbe3"></div>
<div class="r" style="left:466.9px;top:606px;width:143px;height:3px;background:#eeeeee"></div>
<div class="t" style="left:468.90px;top:600.00px;font:bold 13px 'Liberation Sans',sans-serif;color:#333;letter-spacing:0.613px;">Q' Vertical @ 115 ms</div>
<svg style="left:0px;top:0px" width="1390" height="1043" shape-rendering="crispEdges"><rect x="508" y="223" width="851" height="297" fill="#ffffff"/><rect x="509" y="224" width="849" height="295" fill="#000000"/><rect x="510" y="225" width="847" height="293" fill="#ffffff"/><rect x="509" y="224" width="1" height="295" fill="#6e6e96"/><rect x="540" y="225" width="1" height="293" fill="#c0c0c0"/><rect x="540" y="519" width="1" height="5" fill="#000"/><rect x="629" y="225" width="1" height="293" fill="#c0c0c0"/><rect x="629" y="519" width="1" height="5" fill="#000"/><rect x="718" y="225" width="1" height="293" fill="#c0c0c0"/><rect x="718" y="519" width="1" height="5" fill="#000"/><rect x="807" y="225" width="1" height="293" fill="#c0c0c0"/><rect x="807" y="519" width="1" height="5" fill="#000"/><rect x="896" y="225" width="1" height="293" fill="#c0c0c0"/><rect x="896" y="519" width="1" height="5" fill="#000"/><rect x="986" y="225" width="1" height="293" fill="#c0c0c0"/><rect x="986" y="519" width="1" height="5" fill="#000"/><rect x="1075" y="225" width="1" height="293" fill="#c0c0c0"/><rect x="1075" y="519" width="1" height="5" fill="#000"/><rect x="1164" y="225" width="1" height="293" fill="#c0c0c0"/><rect x="1164" y="519" width="1" height="5" fill="#000"/><rect x="1253" y="225" width="1" height="293" fill="#c0c0c0"/><rect x="1253" y="519" width="1" height="5" fill="#000"/><rect x="1342" y="225" width="1" height="293" fill="#c0c0c0"/><rect x="1342" y="519" width="1" height="5" fill="#000"/><rect x="510" y="234" width="847" height="1" fill="#c0c0c0"/><rect x="504" y="234" width="5" height="1" fill="#000"/><rect x="510" y="270" width="847" height="1" fill="#c0c0c0"/><rect x="504" y="270" width="5" height="1" fill="#000"/><rect x="510" y="305" width="847" height="1" fill="#c0c0c0"/><rect x="504" y="305" width="5" height="1" fill="#000"/><rect x="510" y="341" width="847" height="1" fill="#c0c0c0"/><rect x="504" y="341" width="5" height="1" fill="#000"/><rect x="510" y="377" width="847" height="1" fill="#c0c0c0"/><rect x="504" y="377" width="5" height="1" fill="#000"/><rect x="510" y="413" width="847" height="1" fill="#c0c0c0"/><rect x="504" y="413" width="5" height="1" fill="#000"/><rect x="510" y="449" width="847" height="1" fill="#c0c0c0"/><rect x="504" y="449" width="5" height="1" fill="#000"/><rect x="510" y="485" width="847" height="1" fill="#c0c0c0"/><rect x="504" y="485" width="5" height="1" fill="#000"/></svg>
<div class="t" style="left:529.14px;top:527.00px;font:normal 12.5px 'Liberation Sans',sans-serif;color:#111;letter-spacing:0.925px;">100</div>
<div class="t" style="left:618.14px;top:527.00px;font:normal 12.5px 'Liberation Sans',sans-serif;color:#111;letter-spacing:0.925px;">200</div>
<div class="t" style="left:707.14px;top:527.00px;font:normal 12.5px 'Liberation Sans',sans-serif;color:#111;letter-spacing:0.925px;">300</div>
<div class="t" style="left:796.14px;top:527.00px;font:normal 12.5px 'Liberation Sans',sans-serif;color:#111;letter-spacing:0.925px;">400</div>
<div class="t" style="left:885.14px;top:527.00px;font:normal 12.5px 'Liberation Sans',sans-serif;color:#111;letter-spacing:0.925px;">500</div>
<div class="t" style="left:975.14px;top:527.00px;font:normal 12.5px 'Liberation Sans',sans-serif;color:#111;letter-spacing:0.925px;">600</div>
<div class="t" style="left:1064.14px;top:527.00px;font:normal 12.5px 'Liberation Sans',sans-serif;color:#111;letter-spacing:0.925px;">700</div>
<div class="t" style="left:1153.14px;top:527.00px;font:normal 12.5px 'Liberation Sans',sans-serif;color:#111;letter-spacing:0.925px;">800</div>
<div class="t" style="left:1242.14px;top:527.00px;font:normal 12.5px 'Liberation Sans',sans-serif;color:#111;letter-spacing:0.925px;">900</div>
<div class="t" style="left:1327.36px;top:527.00px;font:normal 12.5px 'Liberation Sans',sans-serif;color:#111;letter-spacing:0.823px;">1000</div>
<div class="t" style="left:493.55px;top:229.00px;font:normal 12.5px 'Liberation Sans',sans-serif;color:#111;letter-spacing:0.000px;">3</div>
<div class="t" style="left:493.55px;top:265.00px;font:normal 12.5px 'Liberation Sans',sans-serif;color:#111;letter-spacing:0.000px;">2</div>
<div class="t" style="left:493.55px;top:300.00px;font:normal 12.5px 'Liberation Sans',sans-serif;color:#111;letter-spacing:0.000px;">1</div>
<div class="t" style="left:493.55px;top:336.00px;font:normal 12.5px 'Liberation Sans',sans-serif;color:#111;letter-spacing:0.000px;">0</div>
<div class="t" style="left:489.39px;top:372.00px;font:normal 12.5px 'Liberation Sans',sans-serif;color:#111;letter-spacing:0.000px;">-1</div>
<div class="t" style="left:489.39px;top:408.00px;font:normal 12.5px 'Liberation Sans',sans-serif;color:#111;letter-spacing:0.000px;">-2</div>
<div class="t" style="left:489.39px;top:444.00px;font:normal 12.5px 'Liberation Sans',sans-serif;color:#111;letter-spacing:0.000px;">-3</div>
<div class="t" style="left:489.39px;top:480.00px;font:normal 12.5px 'Liberation Sans',sans-serif;color:#111;letter-spacing:0.000px;">-4</div>
<div class="t" style="left:882.00px;top:545.00px;font:bold 13px 'Liberation Sans',sans-serif;color:#111;letter-spacing:0.599px;">Cycle time [ms]</div>
<svg style="left:0px;top:0px" width="1390" height="1043"><polyline points="553.6,308.4 574.1,248.3 594.6,368.5 615.2,326.5 635.7,422.3 656.2,460.3 676.7,378.1 697.2,304.6 717.8,345.9 738.3,387.8 758.8,410.1 779.3,405.0 799.8,277.7 820.4,377.4 840.9,407.9 861.4,317.9 881.9,280.2 902.4,354.5 923.0,383.2 943.5,317.9 964.0,393.6 984.5,398.2 1005.0,425.1 1025.6,429.8 1046.1,468.2 1066.6,294.9 1087.1,393.6 1107.6,417.6 1128.2,376.7 1148.7,410.8 1169.2,422.6 1189.7,360.2 1210.2,492.2 1230.8,346.6 1251.3,302.8 1271.8,350.5 1292.3,301.4 1312.8,377.4" fill="none" stroke="#0000cc" stroke-width="1" shape-rendering="crispEdges"/><path d="M553.6 301.4 V312.4 M551.6 301.4 H555.6 M551.6 312.4 H555.6" stroke="#0000ee" stroke-width="1" fill="none" shape-rendering="crispEdges"/><path d="M553.6 303.9 L556.4 308.9 L550.8 308.9 Z" fill="#ff00ff"/><path d="M574.1 241.3 V252.3 M572.1 241.3 H576.1 M572.1 252.3 H576.1" stroke="#0000ee" stroke-width="1" fill="none" shape-rendering="crispEdges"/><path d="M574.1 243.8 L576.9 248.8 L571.3 248.8 Z" fill="#ff00ff"/><path d="M594.6 361.5 V372.5 M592.6 361.5 H596.6 M592.6 372.5 H596.6" stroke="#0000ee" stroke-width="1" fill="none" shape-rendering="crispEdges"/><path d="M594.6 364.0 L597.4 369.0 L591.8 369.0 Z" fill="#ff00ff"/><path d="M615.2 319.5 V330.5 M613.2 319.5 H617.2 M613.2 330.5 H617.2" stroke="#0000ee" stroke-width="1" fill="none" shape-rendering="crispEdges"/><path d="M615.2 322.0 L618.0 327.0 L612.4 327.0 Z" fill="#ff00ff"/><path d="M635.7 415.3 V426.3 M633.7 415.3 H637.7 M633.7 426.3 H637.7" stroke="#0000ee" stroke-width="1" fill="none" shape-rendering="crispEdges"/><path d="M635.7 417.8 L638.5 422.8 L632.9 422.8 Z" fill="#ff00ff"/><path d="M656.2 453.3 V464.3 M654.2 453.3 H658.2 M654.2 464.3 H658.2" stroke="#0000ee" stroke-width="1" fill="none" shape-rendering="crispEdges"/><path d="M656.2 455.8 L659.0 460.8 L653.4 460.8 Z" fill="#ff00ff"/><path d="M676.7 371.1 V382.1 M674.7 371.1 H678.7 M674.7 382.1 H678.7" stroke="#0000ee" stroke-width="1" fill="none" shape-rendering="crispEdges"/><path d="M676.7 373.6 L679.5 378.6 L673.9 378.6 Z" fill="#ff00ff"/><path d="M697.2 297.6 V308.6 M695.2 297.6 H699.2 M695.2 308.6 H699.2" stroke="#0000ee" stroke-width="1" fill="none" shape-rendering="crispEdges"/><path d="M697.2 300.1 L700.0 305.1 L694.4 305.1 Z" fill="#ff00ff"/><path d="M717.8 338.9 V349.9 M715.8 338.9 H719.8 M715.8 349.9 H719.8" stroke="#0000ee" stroke-width="1" fill="none" shape-rendering="crispEdges"/><path d="M717.8 341.4 L720.6 346.4 L715.0 346.4 Z" fill="#ff00ff"/><path d="M738.3 380.8 V391.8 M736.3 380.8 H740.3 M736.3 391.8 H740.3" stroke="#0000ee" stroke-width="1" fill="none" shape-rendering="crispEdges"/><path d="M738.3 383.3 L741.1 388.3 L735.5 388.3 Z" fill="#ff00ff"/><path d="M758.8 403.1 V414.1 M756.8 403.1 H760.8 M756.8 414.1 H760.8" stroke="#0000ee" stroke-width="1" fill="none" shape-rendering="crispEdges"/><path d="M758.8 405.6 L761.6 410.6 L756.0 410.6 Z" fill="#ff00ff"/><path d="M779.3 398.0 V409.0 M777.3 398.0 H781.3 M777.3 409.0 H781.3" stroke="#0000ee" stroke-width="1" fill="none" shape-rendering="crispEdges"/><path d="M779.3 400.5 L782.1 405.5 L776.5 405.5 Z" fill="#ff00ff"/><path d="M799.8 270.7 V281.7 M797.8 270.7 H801.8 M797.8 281.7 H801.8" stroke="#0000ee" stroke-width="1" fill="none" shape-rendering="crispEdges"/><path d="M799.8 273.2 L802.6 278.2 L797.0 278.2 Z" fill="#ff00ff"/><path d="M820.4 370.4 V381.4 M818.4 370.4 H822.4 M818.4 381.4 H822.4" stroke="#0000ee" stroke-width="1" fill="none" shape-rendering="crispEdges"/><path d="M820.4 372.9 L823.2 377.9 L817.6 377.9 Z" fill="#ff00ff"/><path d="M840.9 400.9 V411.9 M838.9 400.9 H842.9 M838.9 411.9 H842.9" stroke="#0000ee" stroke-width="1" fill="none" shape-rendering="crispEdges"/><path d="M840.9 403.4 L843.7 408.4 L838.1 408.4 Z" fill="#ff00ff"/><path d="M861.4 310.9 V321.9 M859.4 310.9 H863.4 M859.4 321.9 H863.4" stroke="#0000ee" stroke-width="1" fill="none" shape-rendering="crispEdges"/><path d="M861.4 313.4 L864.2 318.4 L858.6 318.4 Z" fill="#ff00ff"/><path d="M881.9 273.2 V284.2 M879.9 273.2 H883.9 M879.9 284.2 H883.9" stroke="#0000ee" stroke-width="1" fill="none" shape-rendering="crispEdges"/><path d="M881.9 275.7 L884.7 280.7 L879.1 280.7 Z" fill="#ff00ff"/><path d="M902.4 347.5 V358.5 M900.4 347.5 H904.4 M900.4 358.5 H904.4" stroke="#0000ee" stroke-width="1" fill="none" shape-rendering="crispEdges"/><path d="M902.4 350.0 L905.2 355.0 L899.6 355.0 Z" fill="#ff00ff"/><path d="M923.0 376.2 V387.2 M921.0 376.2 H925.0 M921.0 387.2 H925.0" stroke="#0000ee" stroke-width="1" fill="none" shape-rendering="crispEdges"/><path d="M923.0 378.7 L925.8 383.7 L920.2 383.7 Z" fill="#ff00ff"/><path d="M943.5 310.9 V321.9 M941.5 310.9 H945.5 M941.5 321.9 H945.5" stroke="#0000ee" stroke-width="1" fill="none" shape-rendering="crispEdges"/><path d="M943.5 313.4 L946.3 318.4 L940.7 318.4 Z" fill="#ff00ff"/><path d="M964.0 386.6 V397.6 M962.0 386.6 H966.0 M962.0 397.6 H966.0" stroke="#0000ee" stroke-width="1" fill="none" shape-rendering="crispEdges"/><path d="M964.0 389.1 L966.8 394.1 L961.2 394.1 Z" fill="#ff00ff"/><path d="M984.5 391.2 V402.2 M982.5 391.2 H986.5 M982.5 402.2 H986.5" stroke="#0000ee" stroke-width="1" fill="none" shape-rendering="crispEdges"/><path d="M984.5 393.7 L987.3 398.7 L981.7 398.7 Z" fill="#ff00ff"/><path d="M1005.0 418.1 V429.1 M1003.0 418.1 H1007.0 M1003.0 429.1 H1007.0" stroke="#0000ee" stroke-width="1" fill="none" shape-rendering="crispEdges"/><path d="M1005.0 420.6 L1007.8 425.6 L1002.2 425.6 Z" fill="#ff00ff"/><path d="M1025.6 422.8 V433.8 M1023.6 422.8 H1027.6 M1023.6 433.8 H1027.6" stroke="#0000ee" stroke-width="1" fill="none" shape-rendering="crispEdges"/><path d="M1025.6 425.3 L1028.4 430.3 L1022.8 430.3 Z" fill="#ff00ff"/><path d="M1046.1 461.2 V472.2 M1044.1 461.2 H1048.1 M1044.1 472.2 H1048.1" stroke="#0000ee" stroke-width="1" fill="none" shape-rendering="crispEdges"/><path d="M1046.1 463.7 L1048.9 468.7 L1043.3 468.7 Z" fill="#ff00ff"/><path d="M1066.6 287.9 V298.9 M1064.6 287.9 H1068.6 M1064.6 298.9 H1068.6" stroke="#0000ee" stroke-width="1" fill="none" shape-rendering="crispEdges"/><path d="M1066.6 290.4 L1069.4 295.4 L1063.8 295.4 Z" fill="#ff00ff"/><path d="M1087.1 386.6 V397.6 M1085.1 386.6 H1089.1 M1085.1 397.6 H1089.1" stroke="#0000ee" stroke-width="1" fill="none" shape-rendering="crispEdges"/><path d="M1087.1 389.1 L1089.9 394.1 L1084.3 394.1 Z" fill="#ff00ff"/><path d="M1107.6 410.6 V421.6 M1105.6 410.6 H1109.6 M1105.6 421.6 H1109.6" stroke="#0000ee" stroke-width="1" fill="none" shape-rendering="crispEdges"/><path d="M1107.6 413.1 L1110.4 418.1 L1104.8 418.1 Z" fill="#ff00ff"/><path d="M1128.2 369.7 V380.7 M1126.2 369.7 H1130.2 M1126.2 380.7 H1130.2" stroke="#0000ee" stroke-width="1" fill="none" shape-rendering="crispEdges"/><path d="M1128.2 372.2 L1131.0 377.2 L1125.4 377.2 Z" fill="#ff00ff"/><path d="M1148.7 403.8 V414.8 M1146.7 403.8 H1150.7 M1146.7 414.8 H1150.7" stroke="#0000ee" stroke-width="1" fill="none" shape-rendering="crispEdges"/><path d="M1148.7 406.3 L1151.5 411.3 L1145.9 411.3 Z" fill="#ff00ff"/><path d="M1169.2 415.6 V426.6 M1167.2 415.6 H1171.2 M1167.2 426.6 H1171.2" stroke="#0000ee" stroke-width="1" fill="none" shape-rendering="crispEdges"/><path d="M1169.2 418.1 L1172.0 423.1 L1166.4 423.1 Z" fill="#ff00ff"/><path d="M1189.7 353.2 V364.2 M1187.7 353.2 H1191.7 M1187.7 364.2 H1191.7" stroke="#0000ee" stroke-width="1" fill="none" shape-rendering="crispEdges"/><path d="M1189.7 355.7 L1192.5 360.7 L1186.9 360.7 Z" fill="#ff00ff"/><path d="M1210.2 485.2 V496.2 M1208.2 485.2 H1212.2 M1208.2 496.2 H1212.2" stroke="#0000ee" stroke-width="1" fill="none" shape-rendering="crispEdges"/><path d="M1210.2 487.7 L1213.0 492.7 L1207.4 492.7 Z" fill="#ff00ff"/><path d="M1230.8 339.6 V350.6 M1228.8 339.6 H1232.8 M1228.8 350.6 H1232.8" stroke="#0000ee" stroke-width="1" fill="none" shape-rendering="crispEdges"/><path d="M1230.8 342.1 L1233.6 347.1 L1228.0 347.1 Z" fill="#ff00ff"/><path d="M1251.3 295.8 V306.8 M1249.3 295.8 H1253.3 M1249.3 306.8 H1253.3" stroke="#0000ee" stroke-width="1" fill="none" shape-rendering="crispEdges"/><path d="M1251.3 298.3 L1254.1 303.3 L1248.5 303.3 Z" fill="#ff00ff"/><path d="M1271.8 343.5 V354.5 M1269.8 343.5 H1273.8 M1269.8 354.5 H1273.8" stroke="#0000ee" stroke-width="1" fill="none" shape-rendering="crispEdges"/><path d="M1271.8 346.0 L1274.6 351.0 L1269.0 351.0 Z" fill="#ff00ff"/><path d="M1292.3 294.4 V305.4 M1290.3 294.4 H1294.3 M1290.3 305.4 H1294.3" stroke="#0000ee" stroke-width="1" fill="none" shape-rendering="crispEdges"/><path d="M1292.3 296.9 L1295.1 301.9 L1289.5 301.9 Z" fill="#ff00ff"/><path d="M1312.8 370.4 V381.4 M1310.8 370.4 H1314.8 M1310.8 381.4 H1314.8" stroke="#0000ee" stroke-width="1" fill="none" shape-rendering="crispEdges"/><path d="M1312.8 372.9 L1315.6 377.9 L1310.0 377.9 Z" fill="#ff00ff"/><path d="M504.5 214.5 H513.5 V219.5 L509.5 223.5 L504.5 219.5 Z" fill="#9a9acc" stroke="#000" stroke-width="1"/></svg>
<svg style="left:0px;top:0px" width="1390" height="1043" shape-rendering="crispEdges"><rect x="524" y="623" width="839" height="304" fill="#ffffff"/><rect x="525" y="624" width="837" height="302" fill="#000000"/><rect x="526" y="625" width="835" height="300" fill="#ffffff"/><rect x="608" y="625" width="1" height="300" fill="#c0c0c0"/><rect x="608" y="926" width="1" height="5" fill="#000"/><rect x="775" y="625" width="1" height="300" fill="#c0c0c0"/><rect x="775" y="926" width="1" height="5" fill="#000"/><rect x="943" y="625" width="1" height="300" fill="#c0c0c0"/><rect x="943" y="926" width="1" height="5" fill="#000"/><rect x="1110" y="625" width="1" height="300" fill="#c0c0c0"/><rect x="1110" y="926" width="1" height="5" fill="#000"/><rect x="1277" y="625" width="1" height="300" fill="#c0c0c0"/><rect x="1277" y="926" width="1" height="5" fill="#000"/><rect x="526" y="668" width="835" height="1" fill="#c0c0c0"/><rect x="520" y="668" width="5" height="1" fill="#000"/><rect x="526" y="719" width="835" height="1" fill="#c0c0c0"/><rect x="520" y="719" width="5" height="1" fill="#000"/><rect x="526" y="769" width="835" height="1" fill="#c0c0c0"/><rect x="520" y="769" width="5" height="1" fill="#000"/><rect x="526" y="820" width="835" height="1" fill="#c0c0c0"/><rect x="520" y="820" width="5" height="1" fill="#000"/><rect x="526" y="870" width="835" height="1" fill="#c0c0c0"/><rect x="520" y="870" width="5" height="1" fill="#000"/><rect x="526" y="921" width="835" height="1" fill="#c0c0c0"/><rect x="520" y="921" width="5" height="1" fill="#000"/></svg>
<div class="t" style="left:597.73px;top:934.00px;font:normal 12.5px 'Liberation Sans',sans-serif;color:#111;letter-spacing:0.000px;">-0.4</div>
<div class="t" style="left:764.73px;top:934.00px;font:normal 12.5px 'Liberation Sans',sans-serif;color:#111;letter-spacing:0.000px;">-0.2</div>
<div class="t" style="left:940.02px;top:934.00px;font:normal 12.5px 'Liberation Sans',sans-serif;color:#111;letter-spacing:0.000px;">0</div>
<div class="t" style="left:1101.81px;top:934.00px;font:normal 12.5px 'Liberation Sans',sans-serif;color:#111;letter-spacing:0.000px;">0.2</div>
<div class="t" style="left:1268.81px;top:934.00px;font:normal 12.5px 'Liberation Sans',sans-serif;color:#111;letter-spacing:0.000px;">0.4</div>
<div class="t" style="left:492.17px;top:916.00px;font:normal 12.5px 'Liberation Sans',sans-serif;color:#111;letter-spacing:0.000px;">0.57</div>
<div class="t" style="left:492.17px;top:865.00px;font:normal 12.5px 'Liberation Sans',sans-serif;color:#111;letter-spacing:0.000px;">0.58</div>
<div class="t" style="left:492.17px;top:815.00px;font:normal 12.5px 'Liberation Sans',sans-serif;color:#111;letter-spacing:0.000px;">0.59</div>
<div class="t" style="left:499.12px;top:764.00px;font:normal 12.5px 'Liberation Sans',sans-serif;color:#111;letter-spacing:0.000px;">0.6</div>
<div class="t" style="left:492.17px;top:714.00px;font:normal 12.5px 'Liberation Sans',sans-serif;color:#111;letter-spacing:0.000px;">0.61</div>
<div class="t" style="left:492.17px;top:663.00px;font:normal 12.5px 'Liberation Sans',sans-serif;color:#111;letter-spacing:0.000px;">0.62</div>
<div class="t" style="left:898.70px;top:952.00px;font:bold 13px 'Liberation Sans',sans-serif;color:#111;letter-spacing:0.722px;">dp/p [permill]</div>
<svg style="left:0px;top:0px" width="1390" height="1043"><polyline points="608.5,751.8 616.9,753.4 625.2,754.9 633.6,756.3 642.0,757.6 650.3,758.8 658.7,759.9 667.1,761.0 675.4,761.9 683.8,762.8 692.1,763.6 700.5,764.3 708.9,764.9 717.2,765.5 725.6,765.9 734.0,766.3 742.3,766.6 750.7,766.9 759.0,767.0 767.4,767.1 775.8,767.1 784.1,767.0 792.5,766.9 800.8,766.7 809.2,766.4 817.6,766.0 825.9,765.6 834.3,765.1 842.7,764.6 851.0,764.0 859.4,763.3 867.7,762.5 876.1,761.7 884.5,760.9 892.8,760.0 901.2,759.0 909.6,757.9 917.9,756.8 926.3,755.7 934.6,754.5 943.0,753.2 951.4,751.9 959.7,750.6 968.1,749.2 976.4,747.7 984.8,746.2 993.2,744.6 1001.5,743.0 1009.9,741.4 1018.3,739.7 1026.6,738.0 1035.0,736.2 1043.3,734.4 1051.7,732.5 1060.1,730.6 1068.4,728.7 1076.8,726.8 1085.2,724.8 1093.5,722.7 1101.9,720.7 1110.2,718.6 1118.6,716.4 1127.0,714.3 1135.3,712.1 1143.7,709.8 1152.0,707.6 1160.4,705.3 1168.8,703.0 1177.1,700.7 1185.5,698.4 1193.9,696.0 1202.2,693.6 1210.6,691.2 1218.9,688.8 1227.3,686.3 1235.7,683.9 1244.0,681.4 1252.4,678.9 1260.8,676.4 1269.1,673.9 1277.5,671.4" fill="none" stroke="#22b422" stroke-width="1.2"/><path d="M608.5 692.3 L612.7 698.8 L604.3 698.8 Z" fill="#0a9494"/><path d="M692.1 680.7 L696.3 687.2 L687.9 687.2 Z" fill="#0a9494"/><path d="M692.1 682.7 L696.3 689.2 L687.9 689.2 Z" fill="#0a9494"/><path d="M775.8 680.2 L780.0 686.7 L771.6 686.7 Z" fill="#0a9494"/><path d="M608.5 860.3 L612.7 866.8 L604.3 866.8 Z" fill="#0a9494"/><path d="M775.8 865.4 L780.0 871.9 L771.6 871.9 Z" fill="#0a9494"/><path d="M859.4 872.5 L863.6 879.0 L855.2 879.0 Z" fill="#0a9494"/><path d="M859.4 875.5 L863.6 882.0 L855.2 882.0 Z" fill="#0a9494"/><path d="M943.0 669.6 L947.2 676.1 L938.8 676.1 Z" fill="#0a9494"/><path d="M943.0 677.1 L947.2 683.6 L938.8 683.6 Z" fill="#0a9494"/><path d="M1026.6 665.0 L1030.8 671.5 L1022.4 671.5 Z" fill="#0a9494"/><path d="M1026.6 686.3 L1030.8 692.8 L1022.4 692.8 Z" fill="#0a9494"/><path d="M1110.2 674.1 L1114.4 680.6 L1106.0 680.6 Z" fill="#0a9494"/><path d="M1110.2 896.2 L1114.4 902.7 L1106.0 902.7 Z" fill="#0a9494"/><path d="M1193.9 667.0 L1198.1 673.5 L1189.7 673.5 Z" fill="#0a9494"/><path d="M1277.5 668.0 L1281.7 674.5 L1273.3 674.5 Z" fill="#0a9494"/></svg>
<div class="r" style="left:1112px;top:624px;width:237px;height:39px;border:1px solid #111;background:#a8e6e6"></div>
<div class="r" style="left:1113px;top:625px;width:235px;height:11px;background:#9cc8c8;border-bottom:1px solid #111"></div>
<svg style="left:1115px;top:625px" width="14" height="11"><rect x="1.5" y="1.5" width="10" height="2.5" rx="1" fill="none" stroke="#111" stroke-width="1"/><path d="M2.5 9.5 L10.5 9.5 L6.5 5.5 Z" fill="#111"/></svg>
<div class="r" style="left:1277px;top:625px;width:1px;height:37px;background:rgba(0,0,0,0.12)"></div>
<div class="t" style="left:1211.00px;top:624.00px;font:bold 11px 'Liberation Sans',sans-serif;color:#111;letter-spacing:0.375px;">Legend</div>
<svg style="left:1118px;top:636px" width="10" height="10"><path d="M5 1.5 L9 8 L1 8 Z" fill="#0000cc"/></svg>
<div class="t" style="left:1138.60px;top:636.00px;font:bold 11.5px 'Liberation Sans',sans-serif;color:#111;letter-spacing:0.085px;">Q data point</div>
<div class="r" style="left:1115.5px;top:655px;width:16px;height:1px;background:#22b422"></div>
<div class="t" style="left:1138.60px;top:650.00px;font:bold 11.5px 'Liberation Sans',sans-serif;color:#111;letter-spacing:0.341px;">Q' = 25.4 + 3.9 - Q'/Q = 0.953 + 0.147</div>
<div class="r" style="left:466px;top:562px;width:907px;height:31px;background:linear-gradient(#fdfdfd,#f1f1f1 40%,#dedede)"></div>
<div class="r" style="left:466px;top:593px;width:907px;height:1px;background:#c8c8c8"></div>
<svg style="left:467px;top:564px" width="10" height="28">
<rect x="1" y="1" width="1" height="1" fill="#9a9a9a"/>
<rect x="5" y="1" width="1" height="1" fill="#9a9a9a"/>
<rect x="9" y="1" width="1" height="1" fill="#9a9a9a"/>
<rect x="3" y="3" width="1" height="1" fill="#9a9a9a"/>
<rect x="7" y="3" width="1" height="1" fill="#9a9a9a"/>
<rect x="1" y="5" width="1" height="1" fill="#9a9a9a"/>
<rect x="5" y="5" width="1" height="1" fill="#9a9a9a"/>
<rect x="9" y="5" width="1" height="1" fill="#9a9a9a"/>
<rect x="3" y="7" width="1" height="1" fill="#9a9a9a"/>
<rect x="7" y="7" width="1" height="1" fill="#9a9a9a"/>
<rect x="1" y="9" width="1" height="1" fill="#9a9a9a"/>
<rect x="5" y="9" width="1" height="1" fill="#9a9a9a"/>
<rect x="9" y="9" width="1" height="1" fill="#9a9a9a"/>
<rect x="3" y="11" width="1" height="1" fill="#9a9a9a"/>
<rect x="7" y="11" width="1" height="1" fill="#9a9a9a"/>
<rect x="1" y="13" width="1" height="1" fill="#9a9a9a"/>
<rect x="5" y="13" width="1" height="1" fill="#9a9a9a"/>
<rect x="9" y="13" width="1" height="1" fill="#9a9a9a"/>
<rect x="3" y="15" width="1" height="1" fill="#9a9a9a"/>
<rect x="7" y="15" width="1" height="1" fill="#9a9a9a"/>
<rect x="1" y="17" width="1" height="1" fill="#9a9a9a"/>
<rect x="5" y="17" width="1" height="1" fill="#9a9a9a"/>
<rect x="9" y="17" width="1" height="1" fill="#9a9a9a"/>
<rect x="3" y="19" width="1" height="1" fill="#9a9a9a"/>
<rect x="7" y="19" width="1" height="1" fill="#9a9a9a"/>
<rect x="1" y="21" width="1" height="1" fill="#9a9a9a"/>
<rect x="5" y="21" width="1" height="1" fill="#9a9a9a"/>
<rect x="9" y="21" width="1" height="1" fill="#9a9a9a"/>
<rect x="3" y="23" width="1" height="1" fill="#9a9a9a"/>
<rect x="7" y="23" width="1" height="1" fill="#9a9a9a"/>
<rect x="1" y="25" width="1" height="1" fill="#9a9a9a"/>
<rect x="5" y="25" width="1" height="1" fill="#9a9a9a"/>
<rect x="9" y="25" width="1" height="1" fill="#9a9a9a"/>
<rect x="3" y="27" width="1" height="1" fill="#9a9a9a"/>
<rect x="7" y="27" width="1" height="1" fill="#9a9a9a"/>
</svg>
<div class="r" style="left:481px;top:564px;width:26px;height:26px;border:1px solid #a0a0a0;background:#eeeeee"></div>
<svg style="left:481px;top:564px" width="26" height="26" shape-rendering="crispEdges"><rect x="6" y="7" width="1" height="1" fill="#111"/><rect x="6" y="19" width="1" height="1" fill="#111"/><rect x="8" y="7" width="1" height="1" fill="#111"/><rect x="8" y="19" width="1" height="1" fill="#111"/><rect x="10" y="7" width="1" height="1" fill="#111"/><rect x="10" y="19" width="1" height="1" fill="#111"/><rect x="12" y="7" width="1" height="1" fill="#111"/><rect x="12" y="19" width="1" height="1" fill="#111"/><rect x="14" y="7" width="1" height="1" fill="#111"/><rect x="14" y="19" width="1" height="1" fill="#111"/><rect x="16" y="7" width="1" height="1" fill="#111"/><rect x="16" y="19" width="1" height="1" fill="#111"/><rect x="18" y="7" width="1" height="1" fill="#111"/><rect x="18" y="19" width="1" height="1" fill="#111"/><rect x="20" y="7" width="1" height="1" fill="#111"/><rect x="20" y="19" width="1" height="1" fill="#111"/><rect x="6" y="9" width="1" height="1" fill="#111"/><rect x="20" y="9" width="1" height="1" fill="#111"/><rect x="6" y="11" width="1" height="1" fill="#111"/><rect x="20" y="11" width="1" height="1" fill="#111"/><rect x="6" y="13" width="1" height="1" fill="#111"/><rect x="20" y="13" width="1" height="1" fill="#111"/><rect x="6" y="15" width="1" height="1" fill="#111"/><rect x="20" y="15" width="1" height="1" fill="#111"/><rect x="6" y="17" width="1" height="1" fill="#111"/><rect x="20" y="17" width="1" height="1" fill="#111"/><rect x="13" y="8" width="1" height="3" fill="#111"/><path d="M11 10 H16 L13.5 12.5 Z" fill="#111"/><rect x="13" y="16" width="1" height="3" fill="#111"/><path d="M11 17 H16 L13.5 14.5 Z" fill="#111"/><rect x="7" y="13" width="3" height="1" fill="#111"/><path d="M9 11 V16 L11.5 13.5 Z" fill="#111"/><rect x="17" y="13" width="3" height="1" fill="#111"/><path d="M18 11 V16 L15.5 13.5 Z" fill="#111"/></svg>
<div class="r" style="left:518px;top:564px;width:28px;height:27px;border:1px solid #7088aa;background:linear-gradient(#ffffff,#e3ecf6 40%,#bcd2e8)"></div>
<svg style="left:518px;top:564px" width="28" height="26"><circle cx="12" cy="11" r="5" fill="#f6f6f2" stroke="#b8a070" stroke-width="1.3"/><rect x="10" y="9" width="4" height="4" fill="none" stroke="#8a8a8a" stroke-width="0.9"/><path d="M15.5 14.5 L20 19" stroke="#a0522d" stroke-width="2"/></svg>
<div class="r" style="left:546px;top:564px;width:15px;height:27px;border:1px solid #a0a0a0;background:#eeeeee"></div>
<svg style="left:546px;top:564px" width="15" height="26"><path d="M4.5 11.5 L10.5 11.5 L7.5 15 Z" fill="#777"/></svg>
<div class="r" style="left:562px;top:564px;width:26px;height:26px;border:1px solid #a0a0a0;background:#eeeeee"></div>
<svg style="left:562px;top:564px" width="26" height="26"><path d="M13 7 V19 M7 13 H19" stroke="#8a8a8a" stroke-width="3.6"/><path d="M13 7.5 V18.5 M7.5 13 H18.5" stroke="#c4c4c4" stroke-width="1.4"/></svg>
<div class="r" style="left:589px;top:564px;width:27px;height:26px;border:1px solid #a0a0a0;background:#eeeeee"></div>
<svg style="left:589px;top:564px" width="27" height="26"><path d="M9 8.5 L18 17.5 M18 8.5 L9 17.5" stroke="#5e5e5e" stroke-width="3.4" stroke-linecap="round"/><path d="M9.5 9 L13.5 13" stroke="#8e8e8e" stroke-width="1"/></svg>
<div class="r" style="left:617px;top:564px;width:27px;height:26px;border:1px solid #a0a0a0;background:#eeeeee"></div>
<svg style="left:617px;top:564px" width="27" height="26"><path d="M7 10 L21 17" stroke="#111" stroke-width="0.9"/><rect x="8" y="7" width="2" height="2" fill="#111"/><rect x="19" y="12" width="2" height="2" fill="#111"/><rect x="12" y="15" width="2" height="2" fill="#111"/></svg>
<div class="r" style="left:645px;top:563px;width:29px;height:29px;border:1px solid #a0a0a0;background:#eeeeee"></div>
<svg style="left:645px;top:563px" width="29" height="29"><path d="M8 14 A7 7 0 0 1 20 9 L22 7 L22 13 L16 13 L18 11 A4.5 4.5 0 0 0 11 14 Z" fill="#707070"/><path d="M21 15 A7 7 0 0 1 9 20 L7 22 L7 16 L13 16 L11 18 A4.5 4.5 0 0 0 18 15 Z" fill="#707070"/></svg>
<div class="r" style="left:675px;top:564px;width:33px;height:26px;border:1px solid #a0a0a0;background:#eeeeee"></div>
<svg style="left:675px;top:564px" width="33" height="26"><rect x="6" y="6.5" width="22" height="14" rx="2.5" fill="#a9a9a4" stroke="#8a8a86" stroke-width="0.8"/><rect x="7" y="7.5" width="20" height="4" rx="1.5" fill="#d2d2ce"/><circle cx="20.5" cy="14.5" r="4" fill="#8a8a84" stroke="#6e6e68" stroke-width="0.8"/><circle cx="20.5" cy="14.5" r="2" fill="#a0a09a"/><rect x="9" y="9" width="3" height="1.5" fill="#888"/></svg>
<div class="r" style="left:709px;top:565px;width:51px;height:24px;border:1px solid #a0a0a0;background:#eeeeee"></div>
<svg style="left:714px;top:570px" width="16" height="15"><rect x="0.5" y="0.5" width="14" height="13.5" fill="#111"/><rect x="2" y="1" width="11" height="6" fill="#fff"/><rect x="10" y="2" width="1.5" height="3" fill="#111"/><rect x="3" y="9" width="9" height="5" fill="#fff"/><rect x="1" y="1" width="1.2" height="12" fill="#8b8b00"/><rect x="12.8" y="1" width="1.2" height="12" fill="#8b8b00"/></svg>
<div class="t" style="left:734.50px;top:570.00px;font:bold 13px 'Liberation Sans',sans-serif;color:#333;letter-spacing:-0.102px;">csv</div>
<div class="r" style="left:466px;top:968px;width:907px;height:31px;background:linear-gradient(#fdfdfd,#f1f1f1 40%,#dedede)"></div>
<div class="r" style="left:466px;top:999px;width:907px;height:1px;background:#c8c8c8"></div>
<svg style="left:467px;top:970px" width="10" height="28">
<rect x="1" y="1" width="1" height="1" fill="#9a9a9a"/>
<rect x="5" y="1" width="1" height="1" fill="#9a9a9a"/>
<rect x="9" y="1" width="1" height="1" fill="#9a9a9a"/>
<rect x="3" y="3" width="1" height="1" fill="#9a9a9a"/>
<rect x="7" y="3" width="1" height="1" fill="#9a9a9a"/>
<rect x="1" y="5" width="1" height="1" fill="#9a9a9a"/>
<rect x="5" y="5" width="1" height="1" fill="#9a9a9a"/>
<rect x="9" y="5" width="1" height="1" fill="#9a9a9a"/>
<rect x="3" y="7" width="1" height="1" fill="#9a9a9a"/>
<rect x="7" y="7" width="1" height="1" fill="#9a9a9a"/>
<rect x="1" y="9" width="1" height="1" fill="#9a9a9a"/>
<rect x="5" y="9" width="1" height="1" fill="#9a9a9a"/>
<rect x="9" y="9" width="1" height="1" fill="#9a9a9a"/>
<rect x="3" y="11" width="1" height="1" fill="#9a9a9a"/>
<rect x="7" y="11" width="1" height="1" fill="#9a9a9a"/>
<rect x="1" y="13" width="1" height="1" fill="#9a9a9a"/>
<rect x="5" y="13" width="1" height="1" fill="#9a9a9a"/>
<rect x="9" y="13" width="1" height="1" fill="#9a9a9a"/>
<rect x="3" y="15" width="1" height="1" fill="#9a9a9a"/>
<rect x="7" y="15" width="1" height="1" fill="#9a9a9a"/>
<rect x="1" y="17" width="1" height="1" fill="#9a9a9a"/>
<rect x="5" y="17" width="1" height="1" fill="#9a9a9a"/>
<rect x="9" y="17" width="1" height="1" fill="#9a9a9a"/>
<rect x="3" y="19" width="1" height="1" fill="#9a9a9a"/>
<rect x="7" y="19" width="1" height="1" fill="#9a9a9a"/>
<rect x="1" y="21" width="1" height="1" fill="#9a9a9a"/>
<rect x="5" y="21" width="1" height="1" fill="#9a9a9a"/>
<rect x="9" y="21" width="1" height="1" fill="#9a9a9a"/>
<rect x="3" y="23" width="1" height="1" fill="#9a9a9a"/>
<rect x="7" y="23" width="1" height="1" fill="#9a9a9a"/>
<rect x="1" y="25" width="1" height="1" fill="#9a9a9a"/>
<rect x="5" y="25" width="1" height="1" fill="#9a9a9a"/>
<rect x="9" y="25" width="1" height="1" fill="#9a9a9a"/>
<rect x="3" y="27" width="1" height="1" fill="#9a9a9a"/>
<rect x="7" y="27" width="1" height="1" fill="#9a9a9a"/>
</svg>
<div class="r" style="left:481px;top:970px;width:26px;height:26px;border:1px solid #a0a0a0;background:#eeeeee"></div>
<svg style="left:481px;top:970px" width="26" height="26" shape-rendering="crispEdges"><rect x="6" y="7" width="1" height="1" fill="#111"/><rect x="6" y="19" width="1" height="1" fill="#111"/><rect x="8" y="7" width="1" height="1" fill="#111"/><rect x="8" y="19" width="1" height="1" fill="#111"/><rect x="10" y="7" width="1" height="1" fill="#111"/><rect x="10" y="19" width="1" height="1" fill="#111"/><rect x="12" y="7" width="1" height="1" fill="#111"/><rect x="12" y="19" width="1" height="1" fill="#111"/><rect x="14" y="7" width="1" height="1" fill="#111"/><rect x="14" y="19" width="1" height="1" fill="#111"/><rect x="16" y="7" width="1" height="1" fill="#111"/><rect x="16" y="19" width="1" height="1" fill="#111"/><rect x="18" y="7" width="1" height="1" fill="#111"/><rect x="18" y="19" width="1" height="1" fill="#111"/><rect x="20" y="7" width="1" height="1" fill="#111"/><rect x="20" y="19" width="1" height="1" fill="#111"/><rect x="6" y="9" width="1" height="1" fill="#111"/><rect x="20" y="9" width="1" height="1" fill="#111"/><rect x="6" y="11" width="1" height="1" fill="#111"/><rect x="20" y="11" width="1" height="1" fill="#111"/><rect x="6" y="13" width="1" height="1" fill="#111"/><rect x="20" y="13" width="1" height="1" fill="#111"/><rect x="6" y="15" width="1" height="1" fill="#111"/><rect x="20" y="15" width="1" height="1" fill="#111"/><rect x="6" y="17" width="1" height="1" fill="#111"/><rect x="20" y="17" width="1" height="1" fill="#111"/><rect x="13" y="8" width="1" height="3" fill="#111"/><path d="M11 10 H16 L13.5 12.5 Z" fill="#111"/><rect x="13" y="16" width="1" height="3" fill="#111"/><path d="M11 17 H16 L13.5 14.5 Z" fill="#111"/><rect x="7" y="13" width="3" height="1" fill="#111"/><path d="M9 11 V16 L11.5 13.5 Z" fill="#111"/><rect x="17" y="13" width="3" height="1" fill="#111"/><path d="M18 11 V16 L15.5 13.5 Z" fill="#111"/></svg>
<div class="r" style="left:518px;top:970px;width:28px;height:27px;border:1px solid #7088aa;background:linear-gradient(#ffffff,#e3ecf6 40%,#bcd2e8)"></div>
<svg style="left:518px;top:970px" width="28" height="26"><circle cx="12" cy="11" r="5" fill="#f6f6f2" stroke="#b8a070" stroke-width="1.3"/><rect x="10" y="9" width="4" height="4" fill="none" stroke="#8a8a8a" stroke-width="0.9"/><path d="M15.5 14.5 L20 19" stroke="#a0522d" stroke-width="2"/></svg>
<div class="r" style="left:546px;top:970px;width:15px;height:27px;border:1px solid #a0a0a0;background:#eeeeee"></div>
<svg style="left:546px;top:970px" width="15" height="26"><path d="M4.5 11.5 L10.5 11.5 L7.5 15 Z" fill="#777"/></svg>
<div class="r" style="left:562px;top:970px;width:26px;height:26px;border:1px solid #a0a0a0;background:#eeeeee"></div>
<svg style="left:562px;top:970px" width="26" height="26"><path d="M13 7 V19 M7 13 H19" stroke="#8a8a8a" stroke-width="3.6"/><path d="M13 7.5 V18.5 M7.5 13 H18.5" stroke="#c4c4c4" stroke-width="1.4"/></svg>
<div class="r" style="left:589px;top:970px;width:27px;height:26px;border:1px solid #a0a0a0;background:#eeeeee"></div>
<svg style="left:589px;top:970px" width="27" height="26"><path d="M9 8.5 L18 17.5 M18 8.5 L9 17.5" stroke="#5e5e5e" stroke-width="3.4" stroke-linecap="round"/><path d="M9.5 9 L13.5 13" stroke="#8e8e8e" stroke-width="1"/></svg>
<div class="r" style="left:617px;top:970px;width:33px;height:26px;border:1px solid #a0a0a0;background:#eeeeee"></div>
<svg style="left:617px;top:970px" width="33" height="26"><rect x="6" y="6.5" width="22" height="14" rx="2.5" fill="#a9a9a4" stroke="#8a8a86" stroke-width="0.8"/><rect x="7" y="7.5" width="20" height="4" rx="1.5" fill="#d2d2ce"/><circle cx="20.5" cy="14.5" r="4" fill="#8a8a84" stroke="#6e6e68" stroke-width="0.8"/><circle cx="20.5" cy="14.5" r="2" fill="#a0a09a"/><rect x="9" y="9" width="3" height="1.5" fill="#888"/></svg>
<div style="position:absolute;left:482.5px;top:368.6px;width:0;height:0;transform:rotate(-90deg);transform-origin:0 0;"><div class="t" style="left:-13.5px;top:-11.8px;font:bold 13px 'Liberation Sans',sans-serif;color:#111;letter-spacing:0.6px">Q'/Q</div></div>
<div style="position:absolute;left:482.5px;top:771.3px;width:0;height:0;transform:rotate(-90deg);transform-origin:0 0;"><div class="t" style="left:-5px;top:-11.8px;font:bold 13px 'Liberation Sans',sans-serif;color:#111">Q</div></div>
</body></html>
